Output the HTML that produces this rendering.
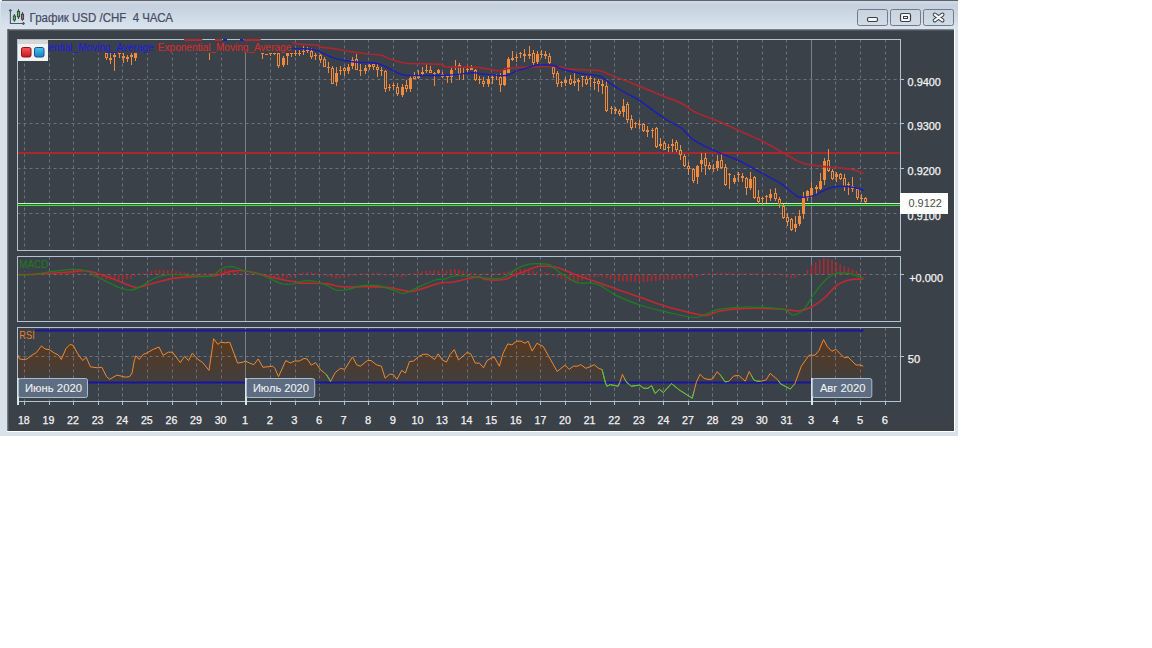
<!DOCTYPE html>
<html><head><meta charset="utf-8"><style>
html,body{margin:0;padding:0;background:#fff;}
body{width:1152px;height:648px;overflow:hidden;position:relative;font-family:"Liberation Sans",sans-serif;}
#win{position:absolute;left:0;top:0;width:958px;height:436px;background:#d9e2eb;border-radius:3px 0 0 0;}
#topline{position:absolute;left:2px;top:0;width:956px;height:1px;background:#5d636c;}
#title{position:absolute;left:1px;top:1px;width:957px;height:28px;background:linear-gradient(#d3dce5 0px,#c3d0dd 4px,#d9e4ee 27px);}
#ttext{position:absolute;left:29px;top:9px;font-size:13px;color:#4a4e62;white-space:nowrap;}
.btn{position:absolute;top:9px;width:29px;height:15px;border:1px solid #6f7b8c;border-radius:2.5px;background:linear-gradient(#c8d3de,#d3dce6);}
#dark{position:absolute;left:7px;top:29px;width:947px;height:402px;background:#3b4149;}
#dk_top{position:absolute;left:7px;top:29px;width:947px;height:2px;background:linear-gradient(#9096a0,#3b4149);}
#dk_left{position:absolute;left:7px;top:29px;width:2px;height:402px;background:linear-gradient(90deg,#8a909a,#3b4149);}
#wline_r{position:absolute;left:954px;top:29px;width:1px;height:403px;background:#ffffff;}
#wline_b{position:absolute;left:7px;top:431px;width:948px;height:1px;background:#ffffff;}
svg{position:absolute;left:0;top:0;}
</style></head><body>
<div id="win"></div>
<div id="topline"></div>
<div id="title"></div>
<svg width="30" height="30" style="left:0;top:0">
<path d="M10.4 9.5 L10.4 23.5 L24.2 23.5" fill="none" stroke="#4a5868" stroke-width="1.1"/>
<path d="M9 10.8 L10.4 9.2 L11.8 10.8 Z" fill="#4a5868" stroke="#4a5868" stroke-width="0.8"/>
<path d="M23 22.1 L24.8 23.5 L23 24.9 Z" fill="#4a5868" stroke="#4a5868" stroke-width="0.8"/>
<line x1="14.4" y1="14" x2="14.4" y2="21.8" stroke="#2e3e34" stroke-width="0.9"/>
<rect x="13.3" y="16" width="2.2" height="4" fill="#7ab07a" stroke="#24482a" stroke-width="0.9"/>
<line x1="18.5" y1="9.2" x2="18.5" y2="19" stroke="#2e3e34" stroke-width="0.9"/>
<rect x="17.4" y="11.3" width="2.2" height="5.5" fill="#7ab07a" stroke="#24482a" stroke-width="0.9"/>
<line x1="22.5" y1="12" x2="22.5" y2="21" stroke="#3e3440" stroke-width="0.9"/>
<rect x="21.4" y="14.2" width="2.2" height="5" fill="#9a7a8a" stroke="#40303a" stroke-width="0.9"/>
</svg>
<svg width="300" height="30" style="left:0;top:0"><text x="29.6" y="21.6" font-size="12" fill="#474a62" stroke="#474a62" stroke-width="0.2" font-family="Liberation Sans" textLength="143.4" lengthAdjust="spacingAndGlyphs" style="white-space:pre">График USD /CHF  4 ЧАСА</text></svg>
<div class="btn" style="left:857px"></div>
<div class="btn" style="left:890px"></div>
<div class="btn" style="left:923px"></div>
<svg width="958" height="30" style="left:0;top:0">
<rect x="867.5" y="17.5" width="10" height="4" rx="1.5" fill="#f4f6f8" stroke="#3a3f48" stroke-width="1.2"/>
<rect x="900.5" y="13.5" width="10" height="8" rx="1.5" fill="#f4f6f8" stroke="#3a3f48" stroke-width="1.2"/>
<rect x="903.5" y="16.5" width="4" height="2" fill="none" stroke="#3a3f48" stroke-width="1"/>
<path d="M934.8 14.6 L942.4 20.4 M942.4 14.6 L934.8 20.4" stroke="#3a3f48" stroke-width="4.2" stroke-linecap="round"/>
<path d="M934.8 14.6 L942.4 20.4 M942.4 14.6 L934.8 20.4" stroke="#f6f8fa" stroke-width="2.2" stroke-linecap="round"/>
</svg>
<div id="dark"></div>
<div id="dk_top"></div>
<div id="dk_left"></div>
<div id="wline_r"></div>
<div id="wline_b"></div>
<svg width="1152" height="648" viewBox="0 0 1152 648">
<defs>
<clipPath id="cm"><rect x="17.5" y="39.5" width="883.0" height="211.0"/></clipPath>
<clipPath id="cd"><rect x="17.5" y="256.5" width="883.0" height="65.0"/></clipPath>
<clipPath id="cr"><rect x="17.5" y="327.5" width="883.0" height="74.0"/></clipPath>
<linearGradient id="rsig" gradientUnits="userSpaceOnUse" x1="0" y1="338" x2="0" y2="386"><stop offset="0" stop-color="#5a391c" stop-opacity="1"/><stop offset="0.5" stop-color="#4d3b2e" stop-opacity="1"/><stop offset="0.85" stop-color="#433e3c" stop-opacity="1"/><stop offset="1" stop-color="#3b4149" stop-opacity="1"/></linearGradient>
<linearGradient id="gred" x1="0" y1="0" x2="0" y2="1"><stop offset="0" stop-color="#f45a5e"/><stop offset="1" stop-color="#c8141c"/></linearGradient>
<linearGradient id="gblue" x1="0" y1="0" x2="0" y2="1"><stop offset="0" stop-color="#4cc4f0"/><stop offset="1" stop-color="#1a7cc4"/></linearGradient>
</defs>
<line x1="24.5" y1="39.5" x2="24.5" y2="250.5" stroke="#68717c" stroke-width="1" stroke-dasharray="3 3"/>
<line x1="49.5" y1="39.5" x2="49.5" y2="250.5" stroke="#68717c" stroke-width="1" stroke-dasharray="3 3"/>
<line x1="73.5" y1="39.5" x2="73.5" y2="250.5" stroke="#68717c" stroke-width="1" stroke-dasharray="3 3"/>
<line x1="98.5" y1="39.5" x2="98.5" y2="250.5" stroke="#68717c" stroke-width="1" stroke-dasharray="3 3"/>
<line x1="122.5" y1="39.5" x2="122.5" y2="250.5" stroke="#68717c" stroke-width="1" stroke-dasharray="3 3"/>
<line x1="147.5" y1="39.5" x2="147.5" y2="250.5" stroke="#68717c" stroke-width="1" stroke-dasharray="3 3"/>
<line x1="172.5" y1="39.5" x2="172.5" y2="250.5" stroke="#68717c" stroke-width="1" stroke-dasharray="3 3"/>
<line x1="196.5" y1="39.5" x2="196.5" y2="250.5" stroke="#68717c" stroke-width="1" stroke-dasharray="3 3"/>
<line x1="221.5" y1="39.5" x2="221.5" y2="250.5" stroke="#68717c" stroke-width="1" stroke-dasharray="3 3"/>
<line x1="270.5" y1="39.5" x2="270.5" y2="250.5" stroke="#68717c" stroke-width="1" stroke-dasharray="3 3"/>
<line x1="295.5" y1="39.5" x2="295.5" y2="250.5" stroke="#68717c" stroke-width="1" stroke-dasharray="3 3"/>
<line x1="319.5" y1="39.5" x2="319.5" y2="250.5" stroke="#68717c" stroke-width="1" stroke-dasharray="3 3"/>
<line x1="344.5" y1="39.5" x2="344.5" y2="250.5" stroke="#68717c" stroke-width="1" stroke-dasharray="3 3"/>
<line x1="368.5" y1="39.5" x2="368.5" y2="250.5" stroke="#68717c" stroke-width="1" stroke-dasharray="3 3"/>
<line x1="393.5" y1="39.5" x2="393.5" y2="250.5" stroke="#68717c" stroke-width="1" stroke-dasharray="3 3"/>
<line x1="417.5" y1="39.5" x2="417.5" y2="250.5" stroke="#68717c" stroke-width="1" stroke-dasharray="3 3"/>
<line x1="442.5" y1="39.5" x2="442.5" y2="250.5" stroke="#68717c" stroke-width="1" stroke-dasharray="3 3"/>
<line x1="467.5" y1="39.5" x2="467.5" y2="250.5" stroke="#68717c" stroke-width="1" stroke-dasharray="3 3"/>
<line x1="491.5" y1="39.5" x2="491.5" y2="250.5" stroke="#68717c" stroke-width="1" stroke-dasharray="3 3"/>
<line x1="516.5" y1="39.5" x2="516.5" y2="250.5" stroke="#68717c" stroke-width="1" stroke-dasharray="3 3"/>
<line x1="540.5" y1="39.5" x2="540.5" y2="250.5" stroke="#68717c" stroke-width="1" stroke-dasharray="3 3"/>
<line x1="565.5" y1="39.5" x2="565.5" y2="250.5" stroke="#68717c" stroke-width="1" stroke-dasharray="3 3"/>
<line x1="590.5" y1="39.5" x2="590.5" y2="250.5" stroke="#68717c" stroke-width="1" stroke-dasharray="3 3"/>
<line x1="614.5" y1="39.5" x2="614.5" y2="250.5" stroke="#68717c" stroke-width="1" stroke-dasharray="3 3"/>
<line x1="639.5" y1="39.5" x2="639.5" y2="250.5" stroke="#68717c" stroke-width="1" stroke-dasharray="3 3"/>
<line x1="663.5" y1="39.5" x2="663.5" y2="250.5" stroke="#68717c" stroke-width="1" stroke-dasharray="3 3"/>
<line x1="688.5" y1="39.5" x2="688.5" y2="250.5" stroke="#68717c" stroke-width="1" stroke-dasharray="3 3"/>
<line x1="712.5" y1="39.5" x2="712.5" y2="250.5" stroke="#68717c" stroke-width="1" stroke-dasharray="3 3"/>
<line x1="737.5" y1="39.5" x2="737.5" y2="250.5" stroke="#68717c" stroke-width="1" stroke-dasharray="3 3"/>
<line x1="762.5" y1="39.5" x2="762.5" y2="250.5" stroke="#68717c" stroke-width="1" stroke-dasharray="3 3"/>
<line x1="786.5" y1="39.5" x2="786.5" y2="250.5" stroke="#68717c" stroke-width="1" stroke-dasharray="3 3"/>
<line x1="835.5" y1="39.5" x2="835.5" y2="250.5" stroke="#68717c" stroke-width="1" stroke-dasharray="3 3"/>
<line x1="860.5" y1="39.5" x2="860.5" y2="250.5" stroke="#68717c" stroke-width="1" stroke-dasharray="3 3"/>
<line x1="885.5" y1="39.5" x2="885.5" y2="250.5" stroke="#68717c" stroke-width="1" stroke-dasharray="3 3"/>
<line x1="245.5" y1="39.5" x2="245.5" y2="250.5" stroke="#75818e" stroke-width="1"/>
<line x1="811.5" y1="39.5" x2="811.5" y2="250.5" stroke="#75818e" stroke-width="1"/>
<line x1="17.5" y1="79.5" x2="900.5" y2="79.5" stroke="#68717c" stroke-width="1" stroke-dasharray="3 3"/>
<line x1="17.5" y1="123.5" x2="900.5" y2="123.5" stroke="#68717c" stroke-width="1" stroke-dasharray="3 3"/>
<line x1="17.5" y1="168.5" x2="900.5" y2="168.5" stroke="#68717c" stroke-width="1" stroke-dasharray="3 3"/>
<line x1="17.5" y1="213.5" x2="900.5" y2="213.5" stroke="#68717c" stroke-width="1" stroke-dasharray="3 3"/>
<g clip-path="url(#cm)">
<line x1="17.5" y1="153" x2="900.5" y2="153" stroke="#a8282e" stroke-width="2"/>
<line x1="17.5" y1="203.5" x2="900.5" y2="203.5" stroke="#cfe9cf" stroke-width="1"/>
<line x1="17.5" y1="204.5" x2="900.5" y2="204.5" stroke="#127a12" stroke-width="1"/>
<line x1="17.5" y1="205.5" x2="900.5" y2="205.5" stroke="#4fd44f" stroke-width="1"/>
<rect x="106" y="53" width="1" height="7" fill="#f08a3c"/>
<rect x="105" y="53" width="3" height="5" fill="#f08a3c"/>
<rect x="106" y="54" width="1" height="3" fill="#3b4149"/>
<rect x="110" y="53" width="1" height="11" fill="#f08a3c"/>
<rect x="109" y="58" width="3" height="2" fill="#f08a3c"/>
<rect x="114" y="53" width="1" height="18" fill="#f08a3c"/>
<rect x="113" y="55" width="3" height="2" fill="#f08a3c"/>
<rect x="119" y="53" width="1" height="5" fill="#f08a3c"/>
<rect x="118" y="53" width="3" height="1" fill="#f08a3c"/>
<rect x="123" y="53" width="1" height="10" fill="#f08a3c"/>
<rect x="122" y="56" width="3" height="2" fill="#f08a3c"/>
<rect x="127" y="55" width="1" height="7" fill="#f08a3c"/>
<rect x="126" y="57" width="3" height="2" fill="#f08a3c"/>
<rect x="131" y="53" width="1" height="12" fill="#f08a3c"/>
<rect x="130" y="55" width="3" height="2" fill="#f08a3c"/>
<rect x="135" y="53" width="1" height="8" fill="#f08a3c"/>
<rect x="134" y="53" width="3" height="5" fill="#f08a3c"/>
<rect x="209" y="52" width="1" height="8" fill="#f08a3c"/>
<rect x="208" y="52" width="3" height="1" fill="#f08a3c"/>
<rect x="262" y="53" width="1" height="6" fill="#f08a3c"/>
<rect x="261" y="53" width="3" height="1" fill="#f08a3c"/>
<rect x="266" y="54" width="1" height="1" fill="#f08a3c"/>
<rect x="265" y="54" width="3" height="1" fill="#f08a3c"/>
<rect x="270" y="53" width="1" height="3" fill="#f08a3c"/>
<rect x="269" y="53" width="3" height="1" fill="#f08a3c"/>
<rect x="274" y="53" width="1" height="2" fill="#f08a3c"/>
<rect x="273" y="53" width="3" height="1" fill="#f08a3c"/>
<rect x="278" y="53" width="1" height="15" fill="#f08a3c"/>
<rect x="277" y="53" width="3" height="13" fill="#f08a3c"/>
<rect x="278" y="54" width="1" height="11" fill="#3b4149"/>
<rect x="283" y="56" width="1" height="11" fill="#f08a3c"/>
<rect x="282" y="58" width="3" height="7" fill="#f08a3c"/>
<rect x="287" y="53" width="1" height="12" fill="#f08a3c"/>
<rect x="286" y="53" width="3" height="3" fill="#f08a3c"/>
<rect x="291" y="53" width="1" height="4" fill="#f08a3c"/>
<rect x="290" y="53" width="3" height="1" fill="#f08a3c"/>
<rect x="295" y="50" width="1" height="6" fill="#f08a3c"/>
<rect x="294" y="53" width="3" height="1" fill="#f08a3c"/>
<rect x="299" y="50" width="1" height="6" fill="#f08a3c"/>
<rect x="298" y="53" width="3" height="1" fill="#f08a3c"/>
<rect x="303" y="46" width="1" height="9" fill="#f08a3c"/>
<rect x="302" y="51" width="3" height="1" fill="#f08a3c"/>
<rect x="307" y="47" width="1" height="6" fill="#f08a3c"/>
<rect x="306" y="50" width="3" height="1" fill="#f08a3c"/>
<rect x="311" y="48" width="1" height="11" fill="#f08a3c"/>
<rect x="310" y="51" width="3" height="6" fill="#f08a3c"/>
<rect x="311" y="52" width="1" height="4" fill="#3b4149"/>
<rect x="315" y="53" width="1" height="7" fill="#f08a3c"/>
<rect x="314" y="55" width="3" height="1" fill="#f08a3c"/>
<rect x="320" y="54" width="1" height="9" fill="#f08a3c"/>
<rect x="319" y="55" width="3" height="5" fill="#f08a3c"/>
<rect x="320" y="56" width="1" height="3" fill="#3b4149"/>
<rect x="324" y="57" width="1" height="10" fill="#f08a3c"/>
<rect x="323" y="59" width="3" height="8" fill="#f08a3c"/>
<rect x="324" y="60" width="1" height="6" fill="#3b4149"/>
<rect x="328" y="62" width="1" height="11" fill="#f08a3c"/>
<rect x="327" y="67" width="3" height="1" fill="#f08a3c"/>
<rect x="332" y="66" width="1" height="18" fill="#f08a3c"/>
<rect x="331" y="68" width="3" height="16" fill="#f08a3c"/>
<rect x="332" y="69" width="1" height="14" fill="#3b4149"/>
<rect x="336" y="67" width="1" height="19" fill="#f08a3c"/>
<rect x="335" y="73" width="3" height="9" fill="#f08a3c"/>
<rect x="340" y="66" width="1" height="9" fill="#f08a3c"/>
<rect x="339" y="70" width="3" height="1" fill="#f08a3c"/>
<rect x="344" y="67" width="1" height="9" fill="#f08a3c"/>
<rect x="343" y="68" width="3" height="3" fill="#f08a3c"/>
<rect x="344" y="69" width="1" height="1" fill="#3b4149"/>
<rect x="348" y="64" width="1" height="10" fill="#f08a3c"/>
<rect x="347" y="67" width="3" height="4" fill="#f08a3c"/>
<rect x="352" y="57" width="1" height="12" fill="#f08a3c"/>
<rect x="351" y="60" width="3" height="6" fill="#f08a3c"/>
<rect x="356" y="54" width="1" height="16" fill="#f08a3c"/>
<rect x="355" y="59" width="3" height="11" fill="#f08a3c"/>
<rect x="356" y="60" width="1" height="9" fill="#3b4149"/>
<rect x="360" y="64" width="1" height="12" fill="#f08a3c"/>
<rect x="359" y="70" width="3" height="1" fill="#f08a3c"/>
<rect x="365" y="65" width="1" height="9" fill="#f08a3c"/>
<rect x="364" y="68" width="3" height="3" fill="#f08a3c"/>
<rect x="369" y="64" width="1" height="6" fill="#f08a3c"/>
<rect x="368" y="65" width="3" height="2" fill="#f08a3c"/>
<rect x="373" y="64" width="1" height="6" fill="#f08a3c"/>
<rect x="372" y="64" width="3" height="3" fill="#f08a3c"/>
<rect x="373" y="65" width="1" height="1" fill="#3b4149"/>
<rect x="377" y="63" width="1" height="14" fill="#f08a3c"/>
<rect x="376" y="67" width="3" height="3" fill="#f08a3c"/>
<rect x="377" y="68" width="1" height="1" fill="#3b4149"/>
<rect x="381" y="67" width="1" height="9" fill="#f08a3c"/>
<rect x="380" y="70" width="3" height="1" fill="#f08a3c"/>
<rect x="385" y="70" width="1" height="22" fill="#f08a3c"/>
<rect x="384" y="71" width="3" height="18" fill="#f08a3c"/>
<rect x="385" y="72" width="1" height="16" fill="#3b4149"/>
<rect x="389" y="84" width="1" height="7" fill="#f08a3c"/>
<rect x="388" y="87" width="3" height="1" fill="#f08a3c"/>
<rect x="393" y="83" width="1" height="7" fill="#f08a3c"/>
<rect x="392" y="85" width="3" height="1" fill="#f08a3c"/>
<rect x="397" y="83" width="1" height="13" fill="#f08a3c"/>
<rect x="396" y="87" width="3" height="7" fill="#f08a3c"/>
<rect x="397" y="88" width="1" height="5" fill="#3b4149"/>
<rect x="402" y="84" width="1" height="13" fill="#f08a3c"/>
<rect x="401" y="87" width="3" height="8" fill="#f08a3c"/>
<rect x="406" y="80" width="1" height="12" fill="#f08a3c"/>
<rect x="405" y="85" width="3" height="4" fill="#f08a3c"/>
<rect x="406" y="86" width="1" height="2" fill="#3b4149"/>
<rect x="410" y="76" width="1" height="16" fill="#f08a3c"/>
<rect x="409" y="78" width="3" height="11" fill="#f08a3c"/>
<rect x="414" y="72" width="1" height="7" fill="#f08a3c"/>
<rect x="413" y="76" width="3" height="3" fill="#f08a3c"/>
<rect x="414" y="77" width="1" height="1" fill="#3b4149"/>
<rect x="418" y="70" width="1" height="9" fill="#f08a3c"/>
<rect x="417" y="76" width="3" height="2" fill="#f08a3c"/>
<rect x="422" y="67" width="1" height="8" fill="#f08a3c"/>
<rect x="421" y="72" width="3" height="2" fill="#f08a3c"/>
<rect x="426" y="63" width="1" height="10" fill="#f08a3c"/>
<rect x="425" y="70" width="3" height="1" fill="#f08a3c"/>
<rect x="430" y="66" width="1" height="7" fill="#f08a3c"/>
<rect x="429" y="70" width="3" height="3" fill="#f08a3c"/>
<rect x="430" y="71" width="1" height="1" fill="#3b4149"/>
<rect x="434" y="72" width="1" height="14" fill="#f08a3c"/>
<rect x="433" y="73" width="3" height="1" fill="#f08a3c"/>
<rect x="438" y="69" width="1" height="5" fill="#f08a3c"/>
<rect x="437" y="70" width="3" height="3" fill="#f08a3c"/>
<rect x="442" y="72" width="1" height="6" fill="#f08a3c"/>
<rect x="441" y="74" width="3" height="3" fill="#f08a3c"/>
<rect x="442" y="75" width="1" height="1" fill="#3b4149"/>
<rect x="447" y="76" width="1" height="7" fill="#f08a3c"/>
<rect x="446" y="76" width="3" height="1" fill="#f08a3c"/>
<rect x="451" y="68" width="1" height="15" fill="#f08a3c"/>
<rect x="450" y="70" width="3" height="7" fill="#f08a3c"/>
<rect x="455" y="60" width="1" height="10" fill="#f08a3c"/>
<rect x="454" y="67" width="3" height="1" fill="#f08a3c"/>
<rect x="459" y="63" width="1" height="17" fill="#f08a3c"/>
<rect x="458" y="65" width="3" height="9" fill="#f08a3c"/>
<rect x="459" y="66" width="1" height="7" fill="#3b4149"/>
<rect x="463" y="68" width="1" height="12" fill="#f08a3c"/>
<rect x="462" y="73" width="3" height="1" fill="#f08a3c"/>
<rect x="467" y="66" width="1" height="7" fill="#f08a3c"/>
<rect x="466" y="69" width="3" height="1" fill="#f08a3c"/>
<rect x="471" y="65" width="1" height="5" fill="#f08a3c"/>
<rect x="470" y="68" width="3" height="2" fill="#f08a3c"/>
<rect x="475" y="69" width="1" height="12" fill="#f08a3c"/>
<rect x="474" y="70" width="3" height="10" fill="#f08a3c"/>
<rect x="475" y="71" width="1" height="8" fill="#3b4149"/>
<rect x="479" y="76" width="1" height="8" fill="#f08a3c"/>
<rect x="478" y="79" width="3" height="1" fill="#f08a3c"/>
<rect x="483" y="77" width="1" height="10" fill="#f08a3c"/>
<rect x="482" y="81" width="3" height="3" fill="#f08a3c"/>
<rect x="483" y="82" width="1" height="1" fill="#3b4149"/>
<rect x="488" y="76" width="1" height="11" fill="#f08a3c"/>
<rect x="487" y="79" width="3" height="5" fill="#f08a3c"/>
<rect x="492" y="75" width="1" height="9" fill="#f08a3c"/>
<rect x="491" y="77" width="3" height="1" fill="#f08a3c"/>
<rect x="496" y="74" width="1" height="6" fill="#f08a3c"/>
<rect x="495" y="75" width="3" height="1" fill="#f08a3c"/>
<rect x="500" y="73" width="1" height="19" fill="#f08a3c"/>
<rect x="499" y="77" width="3" height="8" fill="#f08a3c"/>
<rect x="500" y="78" width="1" height="6" fill="#3b4149"/>
<rect x="504" y="68" width="1" height="18" fill="#f08a3c"/>
<rect x="503" y="70" width="3" height="15" fill="#f08a3c"/>
<rect x="508" y="57" width="1" height="16" fill="#f08a3c"/>
<rect x="507" y="59" width="3" height="14" fill="#f08a3c"/>
<rect x="512" y="51" width="1" height="10" fill="#f08a3c"/>
<rect x="511" y="58" width="3" height="2" fill="#f08a3c"/>
<rect x="516" y="54" width="1" height="8" fill="#f08a3c"/>
<rect x="515" y="57" width="3" height="1" fill="#f08a3c"/>
<rect x="520" y="52" width="1" height="6" fill="#f08a3c"/>
<rect x="519" y="53" width="3" height="1" fill="#f08a3c"/>
<rect x="524" y="49" width="1" height="13" fill="#f08a3c"/>
<rect x="523" y="54" width="3" height="2" fill="#f08a3c"/>
<rect x="529" y="46" width="1" height="13" fill="#f08a3c"/>
<rect x="528" y="54" width="3" height="2" fill="#f08a3c"/>
<rect x="533" y="50" width="1" height="17" fill="#f08a3c"/>
<rect x="532" y="53" width="3" height="10" fill="#f08a3c"/>
<rect x="533" y="54" width="1" height="8" fill="#3b4149"/>
<rect x="537" y="51" width="1" height="13" fill="#f08a3c"/>
<rect x="536" y="54" width="3" height="8" fill="#f08a3c"/>
<rect x="541" y="50" width="1" height="8" fill="#f08a3c"/>
<rect x="540" y="54" width="3" height="1" fill="#f08a3c"/>
<rect x="545" y="51" width="1" height="8" fill="#f08a3c"/>
<rect x="544" y="54" width="3" height="2" fill="#f08a3c"/>
<rect x="549" y="53" width="1" height="11" fill="#f08a3c"/>
<rect x="548" y="56" width="3" height="7" fill="#f08a3c"/>
<rect x="549" y="57" width="1" height="5" fill="#3b4149"/>
<rect x="553" y="66" width="1" height="12" fill="#f08a3c"/>
<rect x="552" y="67" width="3" height="7" fill="#f08a3c"/>
<rect x="553" y="68" width="1" height="5" fill="#3b4149"/>
<rect x="557" y="71" width="1" height="16" fill="#f08a3c"/>
<rect x="556" y="73" width="3" height="11" fill="#f08a3c"/>
<rect x="557" y="74" width="1" height="9" fill="#3b4149"/>
<rect x="561" y="81" width="1" height="6" fill="#f08a3c"/>
<rect x="560" y="82" width="3" height="1" fill="#f08a3c"/>
<rect x="565" y="77" width="1" height="9" fill="#f08a3c"/>
<rect x="564" y="80" width="3" height="3" fill="#f08a3c"/>
<rect x="570" y="75" width="1" height="10" fill="#f08a3c"/>
<rect x="569" y="79" width="3" height="5" fill="#f08a3c"/>
<rect x="570" y="80" width="1" height="3" fill="#3b4149"/>
<rect x="574" y="72" width="1" height="14" fill="#f08a3c"/>
<rect x="573" y="81" width="3" height="2" fill="#f08a3c"/>
<rect x="578" y="78" width="1" height="13" fill="#f08a3c"/>
<rect x="577" y="80" width="3" height="2" fill="#f08a3c"/>
<rect x="582" y="76" width="1" height="11" fill="#f08a3c"/>
<rect x="581" y="76" width="3" height="1" fill="#f08a3c"/>
<rect x="586" y="76" width="1" height="9" fill="#f08a3c"/>
<rect x="585" y="79" width="3" height="5" fill="#f08a3c"/>
<rect x="586" y="80" width="1" height="3" fill="#3b4149"/>
<rect x="590" y="76" width="1" height="11" fill="#f08a3c"/>
<rect x="589" y="78" width="3" height="1" fill="#f08a3c"/>
<rect x="594" y="78" width="1" height="12" fill="#f08a3c"/>
<rect x="593" y="82" width="3" height="1" fill="#f08a3c"/>
<rect x="598" y="79" width="1" height="13" fill="#f08a3c"/>
<rect x="597" y="81" width="3" height="3" fill="#f08a3c"/>
<rect x="598" y="82" width="1" height="1" fill="#3b4149"/>
<rect x="602" y="80" width="1" height="14" fill="#f08a3c"/>
<rect x="601" y="84" width="3" height="2" fill="#f08a3c"/>
<rect x="606" y="81" width="1" height="31" fill="#f08a3c"/>
<rect x="605" y="86" width="3" height="25" fill="#f08a3c"/>
<rect x="606" y="87" width="1" height="23" fill="#3b4149"/>
<rect x="611" y="106" width="1" height="8" fill="#f08a3c"/>
<rect x="610" y="108" width="3" height="1" fill="#f08a3c"/>
<rect x="615" y="107" width="1" height="7" fill="#f08a3c"/>
<rect x="614" y="109" width="3" height="2" fill="#f08a3c"/>
<rect x="619" y="109" width="1" height="7" fill="#f08a3c"/>
<rect x="618" y="111" width="3" height="3" fill="#f08a3c"/>
<rect x="619" y="112" width="1" height="1" fill="#3b4149"/>
<rect x="623" y="99" width="1" height="18" fill="#f08a3c"/>
<rect x="622" y="106" width="3" height="6" fill="#f08a3c"/>
<rect x="627" y="102" width="1" height="21" fill="#f08a3c"/>
<rect x="626" y="104" width="3" height="16" fill="#f08a3c"/>
<rect x="627" y="105" width="1" height="14" fill="#3b4149"/>
<rect x="631" y="115" width="1" height="15" fill="#f08a3c"/>
<rect x="630" y="119" width="3" height="9" fill="#f08a3c"/>
<rect x="631" y="120" width="1" height="7" fill="#3b4149"/>
<rect x="635" y="122" width="1" height="6" fill="#f08a3c"/>
<rect x="634" y="123" width="3" height="1" fill="#f08a3c"/>
<rect x="639" y="120" width="1" height="9" fill="#f08a3c"/>
<rect x="638" y="124" width="3" height="1" fill="#f08a3c"/>
<rect x="643" y="123" width="1" height="9" fill="#f08a3c"/>
<rect x="642" y="124" width="3" height="7" fill="#f08a3c"/>
<rect x="643" y="125" width="1" height="5" fill="#3b4149"/>
<rect x="647" y="126" width="1" height="11" fill="#f08a3c"/>
<rect x="646" y="130" width="3" height="2" fill="#f08a3c"/>
<rect x="652" y="128" width="1" height="10" fill="#f08a3c"/>
<rect x="651" y="130" width="3" height="1" fill="#f08a3c"/>
<rect x="656" y="127" width="1" height="21" fill="#f08a3c"/>
<rect x="655" y="128" width="3" height="19" fill="#f08a3c"/>
<rect x="656" y="129" width="1" height="17" fill="#3b4149"/>
<rect x="660" y="138" width="1" height="11" fill="#f08a3c"/>
<rect x="659" y="144" width="3" height="2" fill="#f08a3c"/>
<rect x="664" y="141" width="1" height="9" fill="#f08a3c"/>
<rect x="663" y="143" width="3" height="7" fill="#f08a3c"/>
<rect x="664" y="144" width="1" height="5" fill="#3b4149"/>
<rect x="668" y="144" width="1" height="8" fill="#f08a3c"/>
<rect x="667" y="147" width="3" height="1" fill="#f08a3c"/>
<rect x="672" y="139" width="1" height="13" fill="#f08a3c"/>
<rect x="671" y="144" width="3" height="2" fill="#f08a3c"/>
<rect x="676" y="140" width="1" height="12" fill="#f08a3c"/>
<rect x="675" y="142" width="3" height="8" fill="#f08a3c"/>
<rect x="676" y="143" width="1" height="6" fill="#3b4149"/>
<rect x="680" y="145" width="1" height="15" fill="#f08a3c"/>
<rect x="679" y="150" width="3" height="5" fill="#f08a3c"/>
<rect x="680" y="151" width="1" height="3" fill="#3b4149"/>
<rect x="684" y="154" width="1" height="13" fill="#f08a3c"/>
<rect x="683" y="156" width="3" height="10" fill="#f08a3c"/>
<rect x="684" y="157" width="1" height="8" fill="#3b4149"/>
<rect x="688" y="162" width="1" height="13" fill="#f08a3c"/>
<rect x="687" y="166" width="3" height="3" fill="#f08a3c"/>
<rect x="688" y="167" width="1" height="1" fill="#3b4149"/>
<rect x="693" y="168" width="1" height="15" fill="#f08a3c"/>
<rect x="692" y="169" width="3" height="12" fill="#f08a3c"/>
<rect x="693" y="170" width="1" height="10" fill="#3b4149"/>
<rect x="697" y="165" width="1" height="19" fill="#f08a3c"/>
<rect x="696" y="166" width="3" height="11" fill="#f08a3c"/>
<rect x="701" y="153" width="1" height="19" fill="#f08a3c"/>
<rect x="700" y="160" width="3" height="4" fill="#f08a3c"/>
<rect x="705" y="153" width="1" height="22" fill="#f08a3c"/>
<rect x="704" y="158" width="3" height="8" fill="#f08a3c"/>
<rect x="705" y="159" width="1" height="6" fill="#3b4149"/>
<rect x="709" y="162" width="1" height="8" fill="#f08a3c"/>
<rect x="708" y="165" width="3" height="4" fill="#f08a3c"/>
<rect x="709" y="166" width="1" height="2" fill="#3b4149"/>
<rect x="713" y="164" width="1" height="8" fill="#f08a3c"/>
<rect x="712" y="168" width="3" height="1" fill="#f08a3c"/>
<rect x="717" y="155" width="1" height="16" fill="#f08a3c"/>
<rect x="716" y="161" width="3" height="7" fill="#f08a3c"/>
<rect x="721" y="154" width="1" height="15" fill="#f08a3c"/>
<rect x="720" y="160" width="3" height="8" fill="#f08a3c"/>
<rect x="721" y="161" width="1" height="6" fill="#3b4149"/>
<rect x="725" y="164" width="1" height="22" fill="#f08a3c"/>
<rect x="724" y="167" width="3" height="18" fill="#f08a3c"/>
<rect x="725" y="168" width="1" height="16" fill="#3b4149"/>
<rect x="729" y="173" width="1" height="16" fill="#f08a3c"/>
<rect x="728" y="174" width="3" height="1" fill="#f08a3c"/>
<rect x="734" y="175" width="1" height="9" fill="#f08a3c"/>
<rect x="733" y="178" width="3" height="4" fill="#f08a3c"/>
<rect x="738" y="172" width="1" height="10" fill="#f08a3c"/>
<rect x="737" y="174" width="3" height="1" fill="#f08a3c"/>
<rect x="742" y="173" width="1" height="9" fill="#f08a3c"/>
<rect x="741" y="176" width="3" height="2" fill="#f08a3c"/>
<rect x="746" y="177" width="1" height="18" fill="#f08a3c"/>
<rect x="745" y="178" width="3" height="10" fill="#f08a3c"/>
<rect x="746" y="179" width="1" height="8" fill="#3b4149"/>
<rect x="750" y="172" width="1" height="18" fill="#f08a3c"/>
<rect x="749" y="179" width="3" height="9" fill="#f08a3c"/>
<rect x="754" y="176" width="1" height="23" fill="#f08a3c"/>
<rect x="753" y="177" width="3" height="21" fill="#f08a3c"/>
<rect x="754" y="178" width="1" height="19" fill="#3b4149"/>
<rect x="758" y="190" width="1" height="14" fill="#f08a3c"/>
<rect x="757" y="197" width="3" height="5" fill="#f08a3c"/>
<rect x="758" y="198" width="1" height="3" fill="#3b4149"/>
<rect x="762" y="197" width="1" height="8" fill="#f08a3c"/>
<rect x="761" y="198" width="3" height="1" fill="#f08a3c"/>
<rect x="766" y="195" width="1" height="8" fill="#f08a3c"/>
<rect x="765" y="196" width="3" height="1" fill="#f08a3c"/>
<rect x="770" y="189" width="1" height="12" fill="#f08a3c"/>
<rect x="769" y="194" width="3" height="4" fill="#f08a3c"/>
<rect x="775" y="188" width="1" height="13" fill="#f08a3c"/>
<rect x="774" y="193" width="3" height="6" fill="#f08a3c"/>
<rect x="775" y="194" width="1" height="4" fill="#3b4149"/>
<rect x="779" y="197" width="1" height="11" fill="#f08a3c"/>
<rect x="778" y="199" width="3" height="5" fill="#f08a3c"/>
<rect x="779" y="200" width="1" height="3" fill="#3b4149"/>
<rect x="783" y="204" width="1" height="15" fill="#f08a3c"/>
<rect x="782" y="206" width="3" height="12" fill="#f08a3c"/>
<rect x="783" y="207" width="1" height="10" fill="#3b4149"/>
<rect x="787" y="213" width="1" height="13" fill="#f08a3c"/>
<rect x="786" y="217" width="3" height="5" fill="#f08a3c"/>
<rect x="787" y="218" width="1" height="3" fill="#3b4149"/>
<rect x="791" y="218" width="1" height="13" fill="#f08a3c"/>
<rect x="790" y="219" width="3" height="11" fill="#f08a3c"/>
<rect x="791" y="220" width="1" height="9" fill="#3b4149"/>
<rect x="795" y="216" width="1" height="16" fill="#f08a3c"/>
<rect x="794" y="224" width="3" height="4" fill="#f08a3c"/>
<rect x="799" y="210" width="1" height="16" fill="#f08a3c"/>
<rect x="798" y="216" width="3" height="8" fill="#f08a3c"/>
<rect x="803" y="192" width="1" height="27" fill="#f08a3c"/>
<rect x="802" y="198" width="3" height="16" fill="#f08a3c"/>
<rect x="807" y="190" width="1" height="11" fill="#f08a3c"/>
<rect x="806" y="191" width="3" height="7" fill="#f08a3c"/>
<rect x="811" y="182" width="1" height="16" fill="#f08a3c"/>
<rect x="810" y="188" width="3" height="8" fill="#f08a3c"/>
<rect x="816" y="185" width="1" height="9" fill="#f08a3c"/>
<rect x="815" y="187" width="3" height="2" fill="#f08a3c"/>
<rect x="820" y="173" width="1" height="17" fill="#f08a3c"/>
<rect x="819" y="181" width="3" height="8" fill="#f08a3c"/>
<rect x="824" y="158" width="1" height="27" fill="#f08a3c"/>
<rect x="823" y="161" width="3" height="19" fill="#f08a3c"/>
<rect x="828" y="149" width="1" height="23" fill="#f08a3c"/>
<rect x="827" y="160" width="3" height="11" fill="#f08a3c"/>
<rect x="828" y="161" width="1" height="9" fill="#3b4149"/>
<rect x="832" y="169" width="1" height="11" fill="#f08a3c"/>
<rect x="831" y="171" width="3" height="8" fill="#f08a3c"/>
<rect x="832" y="172" width="1" height="6" fill="#3b4149"/>
<rect x="836" y="172" width="1" height="10" fill="#f08a3c"/>
<rect x="835" y="174" width="3" height="3" fill="#f08a3c"/>
<rect x="840" y="173" width="1" height="7" fill="#f08a3c"/>
<rect x="839" y="174" width="3" height="5" fill="#f08a3c"/>
<rect x="840" y="175" width="1" height="3" fill="#3b4149"/>
<rect x="844" y="174" width="1" height="17" fill="#f08a3c"/>
<rect x="843" y="178" width="3" height="9" fill="#f08a3c"/>
<rect x="844" y="179" width="1" height="7" fill="#3b4149"/>
<rect x="848" y="182" width="1" height="13" fill="#f08a3c"/>
<rect x="847" y="184" width="3" height="1" fill="#f08a3c"/>
<rect x="852" y="177" width="1" height="15" fill="#f08a3c"/>
<rect x="851" y="186" width="3" height="3" fill="#f08a3c"/>
<rect x="852" y="187" width="1" height="1" fill="#3b4149"/>
<rect x="857" y="189" width="1" height="11" fill="#f08a3c"/>
<rect x="856" y="189" width="3" height="9" fill="#f08a3c"/>
<rect x="857" y="190" width="1" height="7" fill="#3b4149"/>
<rect x="861" y="194" width="1" height="8" fill="#f08a3c"/>
<rect x="860" y="198" width="3" height="1" fill="#f08a3c"/>
<rect x="865" y="197" width="1" height="6" fill="#f08a3c"/>
<rect x="864" y="198" width="3" height="4" fill="#f08a3c"/>
<rect x="865" y="199" width="1" height="2" fill="#3b4149"/>
<path d="M17.0,30.0 C44.2,31.3 151.2,36.3 180.0,38.0 C208.8,39.7 176.7,39.7 190.0,40.0 C203.3,40.3 242.9,39.5 260.0,40.0 C277.1,40.5 286.1,42.2 292.6,42.9 C299.1,43.6 294.8,43.9 298.9,44.2 C303.0,44.6 313.5,44.5 317.0,45.0 C320.5,45.5 317.2,46.4 319.7,47.0 C322.2,47.6 326.7,47.6 332.0,48.4 C337.3,49.2 345.6,51.0 351.7,51.9 C357.8,52.8 363.2,53.4 368.3,54.0 C373.4,54.6 378.5,54.6 382.0,55.4 C385.5,56.2 385.5,57.5 389.2,58.8 C392.9,60.1 399.3,62.2 404.4,63.0 C409.5,63.8 413.7,63.5 420.0,63.7 C426.3,63.9 437.7,63.9 442.0,64.4 C446.3,64.9 440.2,66.4 446.0,66.9 C451.8,67.4 467.9,66.8 476.7,67.4 C485.5,68.0 493.8,70.4 498.9,70.6 C503.9,70.8 502.4,69.2 507.0,68.6 C511.6,68.0 519.7,67.5 526.7,67.2 C533.7,66.9 543.4,66.6 548.9,66.5 C554.4,66.4 556.5,66.3 560.0,66.8 C563.5,67.3 563.5,68.6 570.0,69.2 C576.5,69.9 592.3,69.6 598.9,70.5 C605.5,71.4 603.6,72.5 609.7,74.8 C615.8,77.1 627.0,81.2 635.6,84.6 C644.2,88.0 653.9,92.3 661.5,95.4 C669.1,98.5 675.2,100.1 681.0,103.0 C686.8,105.9 689.5,109.4 696.0,112.6 C702.5,115.8 712.7,118.9 720.0,122.0 C727.3,125.1 733.3,128.0 740.0,131.0 C746.7,134.0 753.5,136.8 760.2,140.1 C766.9,143.4 773.6,147.4 780.3,151.1 C787.0,154.8 794.9,159.8 800.3,162.2 C805.6,164.5 807.4,164.4 812.4,165.2 C817.4,166.0 824.0,166.5 830.4,167.2 C836.8,167.9 845.0,168.2 850.5,169.2 C856.0,170.2 861.4,172.5 863.6,173.2" fill="none" stroke="#a82830" stroke-width="1.7" stroke-linejoin="round"/>
<path d="M17.0,30.0 C50.0,31.3 180.3,36.3 215.0,38.0 C249.7,39.7 221.7,39.8 225.0,40.0 C228.3,40.2 232.0,39.0 235.0,39.0 C238.0,39.0 237.2,39.2 243.0,40.0 C248.8,40.8 261.7,42.6 270.0,44.0 C278.3,45.4 285.9,47.6 292.6,48.4 C299.3,49.2 305.7,48.5 310.0,49.0 C314.3,49.5 314.6,49.8 318.3,51.2 C322.0,52.6 328.0,55.9 332.2,57.4 C336.4,58.9 339.1,59.4 343.3,60.2 C347.5,61.0 351.9,61.8 357.2,62.3 C362.5,62.8 370.7,62.3 375.3,63.0 C379.9,63.7 380.4,64.5 385.0,66.5 C389.6,68.5 397.2,73.3 403.0,74.8 C408.8,76.3 412.2,75.5 420.0,75.5 C427.8,75.5 441.2,75.5 450.0,75.0 C458.8,74.5 467.2,72.9 472.5,72.7 C477.8,72.5 476.4,73.5 482.0,74.0 C487.6,74.5 500.2,76.0 505.8,75.5 C511.4,75.0 512.0,72.6 515.5,71.3 C519.0,70.0 523.0,69.0 526.7,67.9 C530.4,66.9 533.2,65.3 537.8,65.0 C542.4,64.7 550.7,65.2 554.4,65.8 C558.1,66.4 557.4,67.5 560.0,68.4 C562.6,69.3 566.4,70.4 570.0,71.3 C573.6,72.2 576.8,73.0 581.6,73.8 C586.4,74.6 594.6,74.8 598.9,76.0 C603.2,77.2 603.9,79.0 607.5,81.3 C611.1,83.6 615.1,86.8 620.5,90.0 C625.9,93.2 632.8,96.1 640.0,100.8 C647.2,105.5 656.9,113.5 663.7,118.0 C670.5,122.5 676.3,124.4 681.0,127.8 C685.7,131.2 687.4,135.4 691.7,138.6 C696.0,141.8 702.2,144.8 706.9,147.2 C711.6,149.6 714.5,150.8 720.0,153.1 C725.5,155.4 733.3,158.0 740.0,161.2 C746.7,164.4 753.3,168.5 760.0,172.2 C766.7,175.9 774.6,179.5 780.3,183.2 C786.0,186.9 791.0,192.0 794.3,194.3 C797.6,196.7 796.9,197.1 800.3,197.3 C803.6,197.5 809.7,196.8 814.4,195.3 C819.1,193.8 824.0,189.8 828.4,188.3 C832.8,186.8 836.5,186.5 840.5,186.3 C844.5,186.1 848.6,186.6 852.5,187.3 C856.4,188.0 861.8,189.8 863.6,190.3" fill="none" stroke="#1c1cb8" stroke-width="1.4" stroke-linejoin="round"/>
</g>
<rect x="18" y="40" width="274" height="13" fill="#3b4149"/>
<text x="20" y="50.8" font-size="11.2" fill="#1a1ae8" font-family="Liberation Sans" textLength="133.5" lengthAdjust="spacingAndGlyphs">Exponential_Moving_Average</text>
<text x="157.8" y="50.8" font-size="11.2" fill="#e02828" font-family="Liberation Sans" textLength="133.5" lengthAdjust="spacingAndGlyphs">Exponential_Moving_Average</text>
<rect x="17" y="39" width="31" height="22" fill="#f2f2f2"/>
<rect x="17" y="39" width="31" height="5" fill="#d6d6d6"/>
<rect x="21.5" y="47.5" width="9.5" height="9.5" rx="1.8" fill="url(#gred)" stroke="#8a1418" stroke-width="1"/>
<rect x="34.5" y="47.5" width="9.5" height="9.5" rx="1.8" fill="url(#gblue)" stroke="#14508a" stroke-width="1"/>
<rect x="900" y="193" width="48" height="21" fill="#ffffff"/>
<line x1="24.5" y1="256.5" x2="24.5" y2="321.5" stroke="#68717c" stroke-width="1" stroke-dasharray="3 3"/>
<line x1="49.5" y1="256.5" x2="49.5" y2="321.5" stroke="#68717c" stroke-width="1" stroke-dasharray="3 3"/>
<line x1="73.5" y1="256.5" x2="73.5" y2="321.5" stroke="#68717c" stroke-width="1" stroke-dasharray="3 3"/>
<line x1="98.5" y1="256.5" x2="98.5" y2="321.5" stroke="#68717c" stroke-width="1" stroke-dasharray="3 3"/>
<line x1="122.5" y1="256.5" x2="122.5" y2="321.5" stroke="#68717c" stroke-width="1" stroke-dasharray="3 3"/>
<line x1="147.5" y1="256.5" x2="147.5" y2="321.5" stroke="#68717c" stroke-width="1" stroke-dasharray="3 3"/>
<line x1="172.5" y1="256.5" x2="172.5" y2="321.5" stroke="#68717c" stroke-width="1" stroke-dasharray="3 3"/>
<line x1="196.5" y1="256.5" x2="196.5" y2="321.5" stroke="#68717c" stroke-width="1" stroke-dasharray="3 3"/>
<line x1="221.5" y1="256.5" x2="221.5" y2="321.5" stroke="#68717c" stroke-width="1" stroke-dasharray="3 3"/>
<line x1="270.5" y1="256.5" x2="270.5" y2="321.5" stroke="#68717c" stroke-width="1" stroke-dasharray="3 3"/>
<line x1="295.5" y1="256.5" x2="295.5" y2="321.5" stroke="#68717c" stroke-width="1" stroke-dasharray="3 3"/>
<line x1="319.5" y1="256.5" x2="319.5" y2="321.5" stroke="#68717c" stroke-width="1" stroke-dasharray="3 3"/>
<line x1="344.5" y1="256.5" x2="344.5" y2="321.5" stroke="#68717c" stroke-width="1" stroke-dasharray="3 3"/>
<line x1="368.5" y1="256.5" x2="368.5" y2="321.5" stroke="#68717c" stroke-width="1" stroke-dasharray="3 3"/>
<line x1="393.5" y1="256.5" x2="393.5" y2="321.5" stroke="#68717c" stroke-width="1" stroke-dasharray="3 3"/>
<line x1="417.5" y1="256.5" x2="417.5" y2="321.5" stroke="#68717c" stroke-width="1" stroke-dasharray="3 3"/>
<line x1="442.5" y1="256.5" x2="442.5" y2="321.5" stroke="#68717c" stroke-width="1" stroke-dasharray="3 3"/>
<line x1="467.5" y1="256.5" x2="467.5" y2="321.5" stroke="#68717c" stroke-width="1" stroke-dasharray="3 3"/>
<line x1="491.5" y1="256.5" x2="491.5" y2="321.5" stroke="#68717c" stroke-width="1" stroke-dasharray="3 3"/>
<line x1="516.5" y1="256.5" x2="516.5" y2="321.5" stroke="#68717c" stroke-width="1" stroke-dasharray="3 3"/>
<line x1="540.5" y1="256.5" x2="540.5" y2="321.5" stroke="#68717c" stroke-width="1" stroke-dasharray="3 3"/>
<line x1="565.5" y1="256.5" x2="565.5" y2="321.5" stroke="#68717c" stroke-width="1" stroke-dasharray="3 3"/>
<line x1="590.5" y1="256.5" x2="590.5" y2="321.5" stroke="#68717c" stroke-width="1" stroke-dasharray="3 3"/>
<line x1="614.5" y1="256.5" x2="614.5" y2="321.5" stroke="#68717c" stroke-width="1" stroke-dasharray="3 3"/>
<line x1="639.5" y1="256.5" x2="639.5" y2="321.5" stroke="#68717c" stroke-width="1" stroke-dasharray="3 3"/>
<line x1="663.5" y1="256.5" x2="663.5" y2="321.5" stroke="#68717c" stroke-width="1" stroke-dasharray="3 3"/>
<line x1="688.5" y1="256.5" x2="688.5" y2="321.5" stroke="#68717c" stroke-width="1" stroke-dasharray="3 3"/>
<line x1="712.5" y1="256.5" x2="712.5" y2="321.5" stroke="#68717c" stroke-width="1" stroke-dasharray="3 3"/>
<line x1="737.5" y1="256.5" x2="737.5" y2="321.5" stroke="#68717c" stroke-width="1" stroke-dasharray="3 3"/>
<line x1="762.5" y1="256.5" x2="762.5" y2="321.5" stroke="#68717c" stroke-width="1" stroke-dasharray="3 3"/>
<line x1="786.5" y1="256.5" x2="786.5" y2="321.5" stroke="#68717c" stroke-width="1" stroke-dasharray="3 3"/>
<line x1="835.5" y1="256.5" x2="835.5" y2="321.5" stroke="#68717c" stroke-width="1" stroke-dasharray="3 3"/>
<line x1="860.5" y1="256.5" x2="860.5" y2="321.5" stroke="#68717c" stroke-width="1" stroke-dasharray="3 3"/>
<line x1="885.5" y1="256.5" x2="885.5" y2="321.5" stroke="#68717c" stroke-width="1" stroke-dasharray="3 3"/>
<line x1="245.5" y1="256.5" x2="245.5" y2="321.5" stroke="#75818e" stroke-width="1"/>
<line x1="811.5" y1="256.5" x2="811.5" y2="321.5" stroke="#75818e" stroke-width="1"/>
<line x1="17.5" y1="274.5" x2="900.5" y2="274.5" stroke="#68717c" stroke-width="1" stroke-dasharray="3 3"/>
<g clip-path="url(#cd)">
<line x1="20.2" y1="274.5" x2="20.2" y2="273.3" stroke="#b8282c" stroke-width="1.6" stroke-opacity="0.9"/>
<line x1="24.3" y1="274.5" x2="24.3" y2="273.3" stroke="#b8282c" stroke-width="1.6" stroke-opacity="0.9"/>
<line x1="28.4" y1="274.5" x2="28.4" y2="273.3" stroke="#b8282c" stroke-width="1.6" stroke-opacity="0.9"/>
<line x1="32.5" y1="274.5" x2="32.5" y2="275.7" stroke="#b8282c" stroke-width="1.6" stroke-opacity="0.9"/>
<line x1="36.6" y1="274.5" x2="36.6" y2="273.3" stroke="#b8282c" stroke-width="1.6" stroke-opacity="0.9"/>
<line x1="40.7" y1="274.5" x2="40.7" y2="273.3" stroke="#b8282c" stroke-width="1.6" stroke-opacity="0.9"/>
<line x1="44.8" y1="274.5" x2="44.8" y2="273.3" stroke="#b8282c" stroke-width="1.6" stroke-opacity="0.9"/>
<line x1="48.9" y1="274.5" x2="48.9" y2="273.1" stroke="#b8282c" stroke-width="1.6" stroke-opacity="0.9"/>
<line x1="53.0" y1="274.5" x2="53.0" y2="272.9" stroke="#b8282c" stroke-width="1.6" stroke-opacity="0.9"/>
<line x1="57.1" y1="274.5" x2="57.1" y2="272.7" stroke="#b8282c" stroke-width="1.6" stroke-opacity="0.9"/>
<line x1="61.2" y1="274.5" x2="61.2" y2="272.6" stroke="#b8282c" stroke-width="1.6" stroke-opacity="0.9"/>
<line x1="65.3" y1="274.5" x2="65.3" y2="272.4" stroke="#b8282c" stroke-width="1.6" stroke-opacity="0.9"/>
<line x1="69.4" y1="274.5" x2="69.4" y2="272.2" stroke="#b8282c" stroke-width="1.6" stroke-opacity="0.9"/>
<line x1="73.5" y1="274.5" x2="73.5" y2="272.1" stroke="#b8282c" stroke-width="1.6" stroke-opacity="0.9"/>
<line x1="77.6" y1="274.5" x2="77.6" y2="272.8" stroke="#b8282c" stroke-width="1.6" stroke-opacity="0.9"/>
<line x1="81.7" y1="274.5" x2="81.7" y2="273.3" stroke="#b8282c" stroke-width="1.6" stroke-opacity="0.9"/>
<line x1="85.8" y1="274.5" x2="85.8" y2="273.3" stroke="#b8282c" stroke-width="1.6" stroke-opacity="0.9"/>
<line x1="89.9" y1="274.5" x2="89.9" y2="275.7" stroke="#b8282c" stroke-width="1.6" stroke-opacity="0.9"/>
<line x1="94.0" y1="274.5" x2="94.0" y2="276.7" stroke="#b8282c" stroke-width="1.6" stroke-opacity="0.9"/>
<line x1="98.1" y1="274.5" x2="98.1" y2="277.7" stroke="#b8282c" stroke-width="1.6" stroke-opacity="0.9"/>
<line x1="102.2" y1="274.5" x2="102.2" y2="278.6" stroke="#b8282c" stroke-width="1.6" stroke-opacity="0.9"/>
<line x1="106.3" y1="274.5" x2="106.3" y2="279.4" stroke="#b8282c" stroke-width="1.6" stroke-opacity="0.9"/>
<line x1="110.4" y1="274.5" x2="110.4" y2="280.0" stroke="#b8282c" stroke-width="1.6" stroke-opacity="0.9"/>
<line x1="114.5" y1="274.5" x2="114.5" y2="280.3" stroke="#b8282c" stroke-width="1.6" stroke-opacity="0.9"/>
<line x1="118.6" y1="274.5" x2="118.6" y2="280.5" stroke="#b8282c" stroke-width="1.6" stroke-opacity="0.9"/>
<line x1="122.7" y1="274.5" x2="122.7" y2="280.3" stroke="#b8282c" stroke-width="1.6" stroke-opacity="0.9"/>
<line x1="126.8" y1="274.5" x2="126.8" y2="279.4" stroke="#b8282c" stroke-width="1.6" stroke-opacity="0.9"/>
<line x1="130.9" y1="274.5" x2="130.9" y2="278.8" stroke="#b8282c" stroke-width="1.6" stroke-opacity="0.9"/>
<line x1="135.0" y1="274.5" x2="135.0" y2="276.2" stroke="#b8282c" stroke-width="1.6" stroke-opacity="0.9"/>
<line x1="139.1" y1="274.5" x2="139.1" y2="273.3" stroke="#b8282c" stroke-width="1.6" stroke-opacity="0.9"/>
<line x1="143.2" y1="274.5" x2="143.2" y2="273.3" stroke="#b8282c" stroke-width="1.6" stroke-opacity="0.9"/>
<line x1="147.3" y1="274.5" x2="147.3" y2="272.4" stroke="#b8282c" stroke-width="1.6" stroke-opacity="0.9"/>
<line x1="151.4" y1="274.5" x2="151.4" y2="271.2" stroke="#b8282c" stroke-width="1.6" stroke-opacity="0.9"/>
<line x1="155.5" y1="274.5" x2="155.5" y2="269.9" stroke="#b8282c" stroke-width="1.6" stroke-opacity="0.9"/>
<line x1="159.6" y1="274.5" x2="159.6" y2="269.4" stroke="#b8282c" stroke-width="1.6" stroke-opacity="0.9"/>
<line x1="163.7" y1="274.5" x2="163.7" y2="269.8" stroke="#b8282c" stroke-width="1.6" stroke-opacity="0.9"/>
<line x1="167.8" y1="274.5" x2="167.8" y2="270.1" stroke="#b8282c" stroke-width="1.6" stroke-opacity="0.9"/>
<line x1="171.9" y1="274.5" x2="171.9" y2="270.5" stroke="#b8282c" stroke-width="1.6" stroke-opacity="0.9"/>
<line x1="176.0" y1="274.5" x2="176.0" y2="271.0" stroke="#b8282c" stroke-width="1.6" stroke-opacity="0.9"/>
<line x1="180.1" y1="274.5" x2="180.1" y2="271.6" stroke="#b8282c" stroke-width="1.6" stroke-opacity="0.9"/>
<line x1="184.2" y1="274.5" x2="184.2" y2="272.2" stroke="#b8282c" stroke-width="1.6" stroke-opacity="0.9"/>
<line x1="188.3" y1="274.5" x2="188.3" y2="272.8" stroke="#b8282c" stroke-width="1.6" stroke-opacity="0.9"/>
<line x1="192.4" y1="274.5" x2="192.4" y2="273.3" stroke="#b8282c" stroke-width="1.6" stroke-opacity="0.9"/>
<line x1="196.5" y1="274.5" x2="196.5" y2="273.3" stroke="#b8282c" stroke-width="1.6" stroke-opacity="0.9"/>
<line x1="200.6" y1="274.5" x2="200.6" y2="273.3" stroke="#b8282c" stroke-width="1.6" stroke-opacity="0.9"/>
<line x1="204.7" y1="274.5" x2="204.7" y2="273.3" stroke="#b8282c" stroke-width="1.6" stroke-opacity="0.9"/>
<line x1="208.8" y1="274.5" x2="208.8" y2="273.3" stroke="#b8282c" stroke-width="1.6" stroke-opacity="0.9"/>
<line x1="212.9" y1="274.5" x2="212.9" y2="273.3" stroke="#b8282c" stroke-width="1.6" stroke-opacity="0.9"/>
<line x1="217.0" y1="274.5" x2="217.0" y2="271.5" stroke="#b8282c" stroke-width="1.6" stroke-opacity="0.9"/>
<line x1="221.1" y1="274.5" x2="221.1" y2="269.5" stroke="#b8282c" stroke-width="1.6" stroke-opacity="0.9"/>
<line x1="225.2" y1="274.5" x2="225.2" y2="269.1" stroke="#b8282c" stroke-width="1.6" stroke-opacity="0.9"/>
<line x1="229.3" y1="274.5" x2="229.3" y2="269.7" stroke="#b8282c" stroke-width="1.6" stroke-opacity="0.9"/>
<line x1="233.4" y1="274.5" x2="233.4" y2="270.3" stroke="#b8282c" stroke-width="1.6" stroke-opacity="0.9"/>
<line x1="237.5" y1="274.5" x2="237.5" y2="271.9" stroke="#b8282c" stroke-width="1.6" stroke-opacity="0.9"/>
<line x1="241.6" y1="274.5" x2="241.6" y2="273.3" stroke="#b8282c" stroke-width="1.6" stroke-opacity="0.9"/>
<line x1="245.7" y1="274.5" x2="245.7" y2="275.7" stroke="#b8282c" stroke-width="1.6" stroke-opacity="0.9"/>
<line x1="249.8" y1="274.5" x2="249.8" y2="273.3" stroke="#b8282c" stroke-width="1.6" stroke-opacity="0.9"/>
<line x1="253.9" y1="274.5" x2="253.9" y2="273.3" stroke="#b8282c" stroke-width="1.6" stroke-opacity="0.9"/>
<line x1="258.0" y1="274.5" x2="258.0" y2="273.3" stroke="#b8282c" stroke-width="1.6" stroke-opacity="0.9"/>
<line x1="262.1" y1="274.5" x2="262.1" y2="275.7" stroke="#b8282c" stroke-width="1.6" stroke-opacity="0.9"/>
<line x1="266.2" y1="274.5" x2="266.2" y2="275.8" stroke="#b8282c" stroke-width="1.6" stroke-opacity="0.9"/>
<line x1="270.3" y1="274.5" x2="270.3" y2="276.5" stroke="#b8282c" stroke-width="1.6" stroke-opacity="0.9"/>
<line x1="274.4" y1="274.5" x2="274.4" y2="277.3" stroke="#b8282c" stroke-width="1.6" stroke-opacity="0.9"/>
<line x1="278.5" y1="274.5" x2="278.5" y2="278.0" stroke="#b8282c" stroke-width="1.6" stroke-opacity="0.9"/>
<line x1="282.6" y1="274.5" x2="282.6" y2="278.8" stroke="#b8282c" stroke-width="1.6" stroke-opacity="0.9"/>
<line x1="286.7" y1="274.5" x2="286.7" y2="278.1" stroke="#b8282c" stroke-width="1.6" stroke-opacity="0.9"/>
<line x1="290.8" y1="274.5" x2="290.8" y2="277.4" stroke="#b8282c" stroke-width="1.6" stroke-opacity="0.9"/>
<line x1="294.9" y1="274.5" x2="294.9" y2="276.2" stroke="#b8282c" stroke-width="1.6" stroke-opacity="0.9"/>
<line x1="299.0" y1="274.5" x2="299.0" y2="273.3" stroke="#b8282c" stroke-width="1.6" stroke-opacity="0.9"/>
<line x1="303.1" y1="274.5" x2="303.1" y2="272.5" stroke="#b8282c" stroke-width="1.6" stroke-opacity="0.9"/>
<line x1="307.2" y1="274.5" x2="307.2" y2="272.3" stroke="#b8282c" stroke-width="1.6" stroke-opacity="0.9"/>
<line x1="311.3" y1="274.5" x2="311.3" y2="272.2" stroke="#b8282c" stroke-width="1.6" stroke-opacity="0.9"/>
<line x1="315.4" y1="274.5" x2="315.4" y2="272.8" stroke="#b8282c" stroke-width="1.6" stroke-opacity="0.9"/>
<line x1="319.5" y1="274.5" x2="319.5" y2="273.3" stroke="#b8282c" stroke-width="1.6" stroke-opacity="0.9"/>
<line x1="323.6" y1="274.5" x2="323.6" y2="275.7" stroke="#b8282c" stroke-width="1.6" stroke-opacity="0.9"/>
<line x1="327.7" y1="274.5" x2="327.7" y2="276.4" stroke="#b8282c" stroke-width="1.6" stroke-opacity="0.9"/>
<line x1="331.8" y1="274.5" x2="331.8" y2="277.6" stroke="#b8282c" stroke-width="1.6" stroke-opacity="0.9"/>
<line x1="335.9" y1="274.5" x2="335.9" y2="278.8" stroke="#b8282c" stroke-width="1.6" stroke-opacity="0.9"/>
<line x1="340.0" y1="274.5" x2="340.0" y2="278.0" stroke="#b8282c" stroke-width="1.6" stroke-opacity="0.9"/>
<line x1="344.1" y1="274.5" x2="344.1" y2="277.5" stroke="#b8282c" stroke-width="1.6" stroke-opacity="0.9"/>
<line x1="348.2" y1="274.5" x2="348.2" y2="277.0" stroke="#b8282c" stroke-width="1.6" stroke-opacity="0.9"/>
<line x1="352.3" y1="274.5" x2="352.3" y2="276.0" stroke="#b8282c" stroke-width="1.6" stroke-opacity="0.9"/>
<line x1="356.4" y1="274.5" x2="356.4" y2="275.7" stroke="#b8282c" stroke-width="1.6" stroke-opacity="0.9"/>
<line x1="360.5" y1="274.5" x2="360.5" y2="273.3" stroke="#b8282c" stroke-width="1.6" stroke-opacity="0.9"/>
<line x1="364.6" y1="274.5" x2="364.6" y2="273.3" stroke="#b8282c" stroke-width="1.6" stroke-opacity="0.9"/>
<line x1="368.7" y1="274.5" x2="368.7" y2="273.3" stroke="#b8282c" stroke-width="1.6" stroke-opacity="0.9"/>
<line x1="372.8" y1="274.5" x2="372.8" y2="273.2" stroke="#b8282c" stroke-width="1.6" stroke-opacity="0.9"/>
<line x1="376.9" y1="274.5" x2="376.9" y2="273.1" stroke="#b8282c" stroke-width="1.6" stroke-opacity="0.9"/>
<line x1="381.0" y1="274.5" x2="381.0" y2="273.3" stroke="#b8282c" stroke-width="1.6" stroke-opacity="0.9"/>
<line x1="385.1" y1="274.5" x2="385.1" y2="275.7" stroke="#b8282c" stroke-width="1.6" stroke-opacity="0.9"/>
<line x1="389.2" y1="274.5" x2="389.2" y2="275.8" stroke="#b8282c" stroke-width="1.6" stroke-opacity="0.9"/>
<line x1="393.3" y1="274.5" x2="393.3" y2="276.2" stroke="#b8282c" stroke-width="1.6" stroke-opacity="0.9"/>
<line x1="397.4" y1="274.5" x2="397.4" y2="276.7" stroke="#b8282c" stroke-width="1.6" stroke-opacity="0.9"/>
<line x1="401.5" y1="274.5" x2="401.5" y2="277.2" stroke="#b8282c" stroke-width="1.6" stroke-opacity="0.9"/>
<line x1="405.6" y1="274.5" x2="405.6" y2="276.5" stroke="#b8282c" stroke-width="1.6" stroke-opacity="0.9"/>
<line x1="409.7" y1="274.5" x2="409.7" y2="273.3" stroke="#b8282c" stroke-width="1.6" stroke-opacity="0.9"/>
<line x1="413.8" y1="274.5" x2="413.8" y2="273.0" stroke="#b8282c" stroke-width="1.6" stroke-opacity="0.9"/>
<line x1="417.9" y1="274.5" x2="417.9" y2="272.0" stroke="#b8282c" stroke-width="1.6" stroke-opacity="0.9"/>
<line x1="422.0" y1="274.5" x2="422.0" y2="271.4" stroke="#b8282c" stroke-width="1.6" stroke-opacity="0.9"/>
<line x1="426.1" y1="274.5" x2="426.1" y2="271.0" stroke="#b8282c" stroke-width="1.6" stroke-opacity="0.9"/>
<line x1="430.2" y1="274.5" x2="430.2" y2="270.6" stroke="#b8282c" stroke-width="1.6" stroke-opacity="0.9"/>
<line x1="434.3" y1="274.5" x2="434.3" y2="270.2" stroke="#b8282c" stroke-width="1.6" stroke-opacity="0.9"/>
<line x1="438.4" y1="274.5" x2="438.4" y2="270.6" stroke="#b8282c" stroke-width="1.6" stroke-opacity="0.9"/>
<line x1="442.5" y1="274.5" x2="442.5" y2="270.8" stroke="#b8282c" stroke-width="1.6" stroke-opacity="0.9"/>
<line x1="446.6" y1="274.5" x2="446.6" y2="270.4" stroke="#b8282c" stroke-width="1.6" stroke-opacity="0.9"/>
<line x1="450.7" y1="274.5" x2="450.7" y2="269.3" stroke="#b8282c" stroke-width="1.6" stroke-opacity="0.9"/>
<line x1="454.8" y1="274.5" x2="454.8" y2="269.0" stroke="#b8282c" stroke-width="1.6" stroke-opacity="0.9"/>
<line x1="458.9" y1="274.5" x2="458.9" y2="269.8" stroke="#b8282c" stroke-width="1.6" stroke-opacity="0.9"/>
<line x1="463.0" y1="274.5" x2="463.0" y2="270.7" stroke="#b8282c" stroke-width="1.6" stroke-opacity="0.9"/>
<line x1="467.1" y1="274.5" x2="467.1" y2="271.6" stroke="#b8282c" stroke-width="1.6" stroke-opacity="0.9"/>
<line x1="471.2" y1="274.5" x2="471.2" y2="272.8" stroke="#b8282c" stroke-width="1.6" stroke-opacity="0.9"/>
<line x1="475.3" y1="274.5" x2="475.3" y2="273.3" stroke="#b8282c" stroke-width="1.6" stroke-opacity="0.9"/>
<line x1="479.4" y1="274.5" x2="479.4" y2="275.7" stroke="#b8282c" stroke-width="1.6" stroke-opacity="0.9"/>
<line x1="483.5" y1="274.5" x2="483.5" y2="273.3" stroke="#b8282c" stroke-width="1.6" stroke-opacity="0.9"/>
<line x1="487.6" y1="274.5" x2="487.6" y2="273.1" stroke="#b8282c" stroke-width="1.6" stroke-opacity="0.9"/>
<line x1="491.7" y1="274.5" x2="491.7" y2="273.3" stroke="#b8282c" stroke-width="1.6" stroke-opacity="0.9"/>
<line x1="495.8" y1="274.5" x2="495.8" y2="273.3" stroke="#b8282c" stroke-width="1.6" stroke-opacity="0.9"/>
<line x1="499.9" y1="274.5" x2="499.9" y2="272.9" stroke="#b8282c" stroke-width="1.6" stroke-opacity="0.9"/>
<line x1="504.0" y1="274.5" x2="504.0" y2="272.1" stroke="#b8282c" stroke-width="1.6" stroke-opacity="0.9"/>
<line x1="508.1" y1="274.5" x2="508.1" y2="271.6" stroke="#b8282c" stroke-width="1.6" stroke-opacity="0.9"/>
<line x1="512.2" y1="274.5" x2="512.2" y2="270.5" stroke="#b8282c" stroke-width="1.6" stroke-opacity="0.9"/>
<line x1="516.3" y1="274.5" x2="516.3" y2="269.2" stroke="#b8282c" stroke-width="1.6" stroke-opacity="0.9"/>
<line x1="520.4" y1="274.5" x2="520.4" y2="269.1" stroke="#b8282c" stroke-width="1.6" stroke-opacity="0.9"/>
<line x1="524.5" y1="274.5" x2="524.5" y2="269.1" stroke="#b8282c" stroke-width="1.6" stroke-opacity="0.9"/>
<line x1="528.6" y1="274.5" x2="528.6" y2="269.2" stroke="#b8282c" stroke-width="1.6" stroke-opacity="0.9"/>
<line x1="532.7" y1="274.5" x2="532.7" y2="270.6" stroke="#b8282c" stroke-width="1.6" stroke-opacity="0.9"/>
<line x1="536.8" y1="274.5" x2="536.8" y2="271.6" stroke="#b8282c" stroke-width="1.6" stroke-opacity="0.9"/>
<line x1="540.9" y1="274.5" x2="540.9" y2="272.4" stroke="#b8282c" stroke-width="1.6" stroke-opacity="0.9"/>
<line x1="545.0" y1="274.5" x2="545.0" y2="272.2" stroke="#b8282c" stroke-width="1.6" stroke-opacity="0.9"/>
<line x1="549.1" y1="274.5" x2="549.1" y2="273.1" stroke="#b8282c" stroke-width="1.6" stroke-opacity="0.9"/>
<line x1="553.2" y1="274.5" x2="553.2" y2="275.7" stroke="#b8282c" stroke-width="1.6" stroke-opacity="0.9"/>
<line x1="557.3" y1="274.5" x2="557.3" y2="277.2" stroke="#b8282c" stroke-width="1.6" stroke-opacity="0.9"/>
<line x1="561.4" y1="274.5" x2="561.4" y2="279.0" stroke="#b8282c" stroke-width="1.6" stroke-opacity="0.9"/>
<line x1="565.5" y1="274.5" x2="565.5" y2="280.0" stroke="#b8282c" stroke-width="1.6" stroke-opacity="0.9"/>
<line x1="569.6" y1="274.5" x2="569.6" y2="280.9" stroke="#b8282c" stroke-width="1.6" stroke-opacity="0.9"/>
<line x1="573.7" y1="274.5" x2="573.7" y2="281.4" stroke="#b8282c" stroke-width="1.6" stroke-opacity="0.9"/>
<line x1="577.8" y1="274.5" x2="577.8" y2="281.5" stroke="#b8282c" stroke-width="1.6" stroke-opacity="0.9"/>
<line x1="581.9" y1="274.5" x2="581.9" y2="280.5" stroke="#b8282c" stroke-width="1.6" stroke-opacity="0.9"/>
<line x1="586.0" y1="274.5" x2="586.0" y2="279.1" stroke="#b8282c" stroke-width="1.6" stroke-opacity="0.9"/>
<line x1="590.1" y1="274.5" x2="590.1" y2="277.8" stroke="#b8282c" stroke-width="1.6" stroke-opacity="0.9"/>
<line x1="594.2" y1="274.5" x2="594.2" y2="277.3" stroke="#b8282c" stroke-width="1.6" stroke-opacity="0.9"/>
<line x1="598.3" y1="274.5" x2="598.3" y2="276.9" stroke="#b8282c" stroke-width="1.6" stroke-opacity="0.9"/>
<line x1="602.4" y1="274.5" x2="602.4" y2="277.2" stroke="#b8282c" stroke-width="1.6" stroke-opacity="0.9"/>
<line x1="606.5" y1="274.5" x2="606.5" y2="278.3" stroke="#b8282c" stroke-width="1.6" stroke-opacity="0.9"/>
<line x1="610.6" y1="274.5" x2="610.6" y2="279.5" stroke="#b8282c" stroke-width="1.6" stroke-opacity="0.9"/>
<line x1="614.7" y1="274.5" x2="614.7" y2="280.6" stroke="#b8282c" stroke-width="1.6" stroke-opacity="0.9"/>
<line x1="618.8" y1="274.5" x2="618.8" y2="281.1" stroke="#b8282c" stroke-width="1.6" stroke-opacity="0.9"/>
<line x1="622.9" y1="274.5" x2="622.9" y2="281.3" stroke="#b8282c" stroke-width="1.6" stroke-opacity="0.9"/>
<line x1="627.0" y1="274.5" x2="627.0" y2="281.6" stroke="#b8282c" stroke-width="1.6" stroke-opacity="0.9"/>
<line x1="631.1" y1="274.5" x2="631.1" y2="281.8" stroke="#b8282c" stroke-width="1.6" stroke-opacity="0.9"/>
<line x1="635.2" y1="274.5" x2="635.2" y2="282.0" stroke="#b8282c" stroke-width="1.6" stroke-opacity="0.9"/>
<line x1="639.3" y1="274.5" x2="639.3" y2="282.2" stroke="#b8282c" stroke-width="1.6" stroke-opacity="0.9"/>
<line x1="643.4" y1="274.5" x2="643.4" y2="282.2" stroke="#b8282c" stroke-width="1.6" stroke-opacity="0.9"/>
<line x1="647.5" y1="274.5" x2="647.5" y2="281.8" stroke="#b8282c" stroke-width="1.6" stroke-opacity="0.9"/>
<line x1="651.6" y1="274.5" x2="651.6" y2="281.4" stroke="#b8282c" stroke-width="1.6" stroke-opacity="0.9"/>
<line x1="655.7" y1="274.5" x2="655.7" y2="281.0" stroke="#b8282c" stroke-width="1.6" stroke-opacity="0.9"/>
<line x1="659.8" y1="274.5" x2="659.8" y2="280.6" stroke="#b8282c" stroke-width="1.6" stroke-opacity="0.9"/>
<line x1="663.9" y1="274.5" x2="663.9" y2="280.2" stroke="#b8282c" stroke-width="1.6" stroke-opacity="0.9"/>
<line x1="668.0" y1="274.5" x2="668.0" y2="279.8" stroke="#b8282c" stroke-width="1.6" stroke-opacity="0.9"/>
<line x1="672.1" y1="274.5" x2="672.1" y2="279.6" stroke="#b8282c" stroke-width="1.6" stroke-opacity="0.9"/>
<line x1="676.2" y1="274.5" x2="676.2" y2="279.4" stroke="#b8282c" stroke-width="1.6" stroke-opacity="0.9"/>
<line x1="680.3" y1="274.5" x2="680.3" y2="279.1" stroke="#b8282c" stroke-width="1.6" stroke-opacity="0.9"/>
<line x1="684.4" y1="274.5" x2="684.4" y2="278.9" stroke="#b8282c" stroke-width="1.6" stroke-opacity="0.9"/>
<line x1="688.5" y1="274.5" x2="688.5" y2="278.7" stroke="#b8282c" stroke-width="1.6" stroke-opacity="0.9"/>
<line x1="692.6" y1="274.5" x2="692.6" y2="278.5" stroke="#b8282c" stroke-width="1.6" stroke-opacity="0.9"/>
<line x1="696.7" y1="274.5" x2="696.7" y2="277.3" stroke="#b8282c" stroke-width="1.6" stroke-opacity="0.9"/>
<line x1="700.8" y1="274.5" x2="700.8" y2="275.7" stroke="#b8282c" stroke-width="1.6" stroke-opacity="0.9"/>
<line x1="704.9" y1="274.5" x2="704.9" y2="273.3" stroke="#b8282c" stroke-width="1.6" stroke-opacity="0.9"/>
<line x1="709.0" y1="274.5" x2="709.0" y2="272.7" stroke="#b8282c" stroke-width="1.6" stroke-opacity="0.9"/>
<line x1="713.1" y1="274.5" x2="713.1" y2="272.7" stroke="#b8282c" stroke-width="1.6" stroke-opacity="0.9"/>
<line x1="717.2" y1="274.5" x2="717.2" y2="272.7" stroke="#b8282c" stroke-width="1.6" stroke-opacity="0.9"/>
<line x1="721.3" y1="274.5" x2="721.3" y2="272.7" stroke="#b8282c" stroke-width="1.6" stroke-opacity="0.9"/>
<line x1="725.4" y1="274.5" x2="725.4" y2="272.8" stroke="#b8282c" stroke-width="1.6" stroke-opacity="0.9"/>
<line x1="729.5" y1="274.5" x2="729.5" y2="272.8" stroke="#b8282c" stroke-width="1.6" stroke-opacity="0.9"/>
<line x1="733.6" y1="274.5" x2="733.6" y2="272.9" stroke="#b8282c" stroke-width="1.6" stroke-opacity="0.9"/>
<line x1="737.7" y1="274.5" x2="737.7" y2="273.0" stroke="#b8282c" stroke-width="1.6" stroke-opacity="0.9"/>
<line x1="741.8" y1="274.5" x2="741.8" y2="273.0" stroke="#b8282c" stroke-width="1.6" stroke-opacity="0.9"/>
<line x1="745.9" y1="274.5" x2="745.9" y2="273.1" stroke="#b8282c" stroke-width="1.6" stroke-opacity="0.9"/>
<line x1="750.0" y1="274.5" x2="750.0" y2="273.2" stroke="#b8282c" stroke-width="1.6" stroke-opacity="0.9"/>
<line x1="754.1" y1="274.5" x2="754.1" y2="273.3" stroke="#b8282c" stroke-width="1.6" stroke-opacity="0.9"/>
<line x1="758.2" y1="274.5" x2="758.2" y2="273.3" stroke="#b8282c" stroke-width="1.6" stroke-opacity="0.9"/>
<line x1="762.3" y1="274.5" x2="762.3" y2="273.3" stroke="#b8282c" stroke-width="1.6" stroke-opacity="0.9"/>
<line x1="766.4" y1="274.5" x2="766.4" y2="273.3" stroke="#b8282c" stroke-width="1.6" stroke-opacity="0.9"/>
<line x1="770.5" y1="274.5" x2="770.5" y2="273.3" stroke="#b8282c" stroke-width="1.6" stroke-opacity="0.9"/>
<line x1="774.6" y1="274.5" x2="774.6" y2="273.3" stroke="#b8282c" stroke-width="1.6" stroke-opacity="0.9"/>
<line x1="778.7" y1="274.5" x2="778.7" y2="273.3" stroke="#b8282c" stroke-width="1.6" stroke-opacity="0.9"/>
<line x1="782.8" y1="274.5" x2="782.8" y2="275.7" stroke="#b8282c" stroke-width="1.6" stroke-opacity="0.9"/>
<line x1="786.9" y1="274.5" x2="786.9" y2="276.4" stroke="#b8282c" stroke-width="1.6" stroke-opacity="0.9"/>
<line x1="791.0" y1="274.5" x2="791.0" y2="278.2" stroke="#b8282c" stroke-width="1.6" stroke-opacity="0.9"/>
<line x1="795.1" y1="274.5" x2="795.1" y2="277.8" stroke="#b8282c" stroke-width="1.6" stroke-opacity="0.9"/>
<line x1="799.2" y1="274.5" x2="799.2" y2="275.7" stroke="#b8282c" stroke-width="1.6" stroke-opacity="0.9"/>
<line x1="803.3" y1="274.5" x2="803.3" y2="275.7" stroke="#b8282c" stroke-width="1.6" stroke-opacity="0.9"/>
<line x1="807.4" y1="274.5" x2="807.4" y2="270.1" stroke="#b8282c" stroke-width="1.6" stroke-opacity="0.9"/>
<line x1="811.5" y1="274.5" x2="811.5" y2="265.3" stroke="#b8282c" stroke-width="1.6" stroke-opacity="0.9"/>
<line x1="815.6" y1="274.5" x2="815.6" y2="262.4" stroke="#b8282c" stroke-width="1.6" stroke-opacity="0.9"/>
<line x1="819.7" y1="274.5" x2="819.7" y2="260.1" stroke="#b8282c" stroke-width="1.6" stroke-opacity="0.9"/>
<line x1="823.8" y1="274.5" x2="823.8" y2="257.8" stroke="#b8282c" stroke-width="1.6" stroke-opacity="0.9"/>
<line x1="827.9" y1="274.5" x2="827.9" y2="258.6" stroke="#b8282c" stroke-width="1.6" stroke-opacity="0.9"/>
<line x1="832.0" y1="274.5" x2="832.0" y2="259.8" stroke="#b8282c" stroke-width="1.6" stroke-opacity="0.9"/>
<line x1="836.1" y1="274.5" x2="836.1" y2="261.9" stroke="#b8282c" stroke-width="1.6" stroke-opacity="0.9"/>
<line x1="840.2" y1="274.5" x2="840.2" y2="264.4" stroke="#b8282c" stroke-width="1.6" stroke-opacity="0.9"/>
<line x1="844.3" y1="274.5" x2="844.3" y2="266.1" stroke="#b8282c" stroke-width="1.6" stroke-opacity="0.9"/>
<line x1="848.4" y1="274.5" x2="848.4" y2="267.7" stroke="#b8282c" stroke-width="1.6" stroke-opacity="0.9"/>
<line x1="852.5" y1="274.5" x2="852.5" y2="269.4" stroke="#b8282c" stroke-width="1.6" stroke-opacity="0.9"/>
<line x1="856.6" y1="274.5" x2="856.6" y2="271.0" stroke="#b8282c" stroke-width="1.6" stroke-opacity="0.9"/>
<line x1="860.7" y1="274.5" x2="860.7" y2="272.6" stroke="#b8282c" stroke-width="1.6" stroke-opacity="0.9"/>
<line x1="864.8" y1="274.5" x2="864.8" y2="273.3" stroke="#b8282c" stroke-width="1.6" stroke-opacity="0.9"/>
<path d="M17.0,275.3 C21.3,275.0 34.3,274.3 43.0,273.8 C51.7,273.2 61.6,272.5 69.0,272.0 C76.4,271.5 80.8,270.2 87.3,271.0 C93.8,271.8 101.5,274.8 108.0,277.0 C114.5,279.2 121.6,282.4 126.4,284.2 C131.2,285.9 132.9,287.5 136.8,287.5 C140.7,287.5 143.7,285.7 149.8,284.2 C155.9,282.7 165.1,279.7 173.3,278.4 C181.6,277.1 192.4,276.8 199.3,276.4 C206.2,276.0 209.4,276.7 215.0,275.8 C220.6,274.9 227.8,271.8 233.0,271.0 C238.2,270.2 240.8,270.3 246.0,271.0 C251.2,271.7 258.3,273.9 264.4,275.3 C270.5,276.8 277.0,278.5 282.6,279.7 C288.2,280.9 295.4,281.7 298.2,282.3 C301.1,282.9 295.4,282.9 300.0,283.1 C304.6,283.3 319.1,283.0 326.0,283.6 C332.9,284.2 334.8,286.3 341.7,286.8 C348.6,287.3 359.9,286.7 367.7,286.8 C375.5,286.9 381.6,286.7 388.5,287.5 C395.4,288.3 404.2,291.2 409.4,291.5 C414.6,291.8 414.7,290.8 419.8,289.4 C424.9,288.0 434.8,284.2 440.0,283.0 C445.2,281.8 446.5,283.0 451.1,282.3 C455.7,281.6 463.2,279.7 467.8,278.8 C472.4,277.9 475.9,276.6 478.9,276.8 C481.9,276.9 481.6,279.0 485.8,279.5 C490.0,280.0 499.5,280.1 503.9,279.5 C508.3,278.9 509.0,277.3 512.2,276.0 C515.4,274.7 520.0,273.2 523.3,271.9 C526.5,270.6 528.9,269.3 531.7,268.4 C534.5,267.5 536.1,266.5 540.0,266.3 C543.9,266.1 551.1,266.3 555.3,267.0 C559.5,267.7 561.1,269.0 565.0,270.5 C568.9,272.0 574.7,274.5 578.9,276.0 C583.1,277.5 583.8,277.6 590.0,279.7 C596.2,281.8 607.3,285.8 616.0,288.9 C624.7,291.9 633.3,295.0 642.0,298.0 C650.7,301.0 659.3,304.4 668.0,307.0 C676.7,309.6 687.7,312.2 694.2,313.6 C700.7,315.0 702.9,315.8 707.2,315.4 C711.5,315.0 713.7,312.2 720.2,311.0 C726.7,309.8 735.8,308.7 746.2,308.4 C756.7,308.1 774.0,308.8 782.7,309.2 C791.4,309.6 793.5,311.4 798.3,311.0 C803.1,310.6 807.0,309.2 811.4,307.0 C815.8,304.8 820.1,301.7 824.4,298.0 C828.7,294.3 833.1,288.1 837.4,285.0 C841.7,281.9 846.1,280.7 850.4,279.7 C854.7,278.7 861.2,279.3 863.4,279.2" fill="none" stroke="#c02a2e" stroke-width="1.6" stroke-linejoin="round"/>
<path d="M17.0,274.5 C19.6,274.5 27.4,274.9 32.6,274.5 C37.8,274.1 41.6,272.9 48.3,272.0 C55.0,271.1 66.5,269.5 73.0,269.3 C79.5,269.1 83.6,269.9 87.3,271.0 C91.0,272.1 91.5,273.9 95.0,275.8 C98.5,277.7 103.7,280.2 108.0,282.3 C112.3,284.4 117.1,287.0 121.0,288.3 C124.9,289.6 128.1,290.4 131.6,290.0 C135.1,289.6 137.7,287.9 142.0,285.7 C146.3,283.5 152.4,278.9 157.6,277.0 C162.8,275.1 166.4,274.6 173.3,274.5 C180.2,274.4 192.8,276.2 199.3,276.4 C205.8,276.6 208.4,277.2 212.3,275.8 C216.2,274.4 219.2,269.5 222.7,268.0 C226.1,266.5 229.5,266.3 233.0,266.7 C236.5,267.1 239.7,269.5 243.6,270.6 C247.5,271.7 252.3,271.9 256.6,273.2 C260.9,274.5 265.3,276.6 269.6,278.4 C273.9,280.2 278.7,283.1 282.6,284.0 C286.5,284.9 289.5,284.5 293.0,284.0 C296.5,283.5 300.2,281.5 303.5,281.0 C306.8,280.5 309.2,280.3 313.0,281.0 C316.8,281.7 322.1,283.5 326.0,285.0 C329.9,286.5 333.0,289.4 336.5,290.2 C340.0,291.0 342.7,290.4 347.0,289.6 C351.3,288.9 357.3,286.4 362.5,285.7 C367.7,285.0 372.8,284.9 378.0,285.7 C383.2,286.4 389.4,288.9 393.8,290.2 C398.1,291.5 400.1,293.9 404.0,293.5 C407.9,293.1 412.0,289.9 417.2,287.6 C422.4,285.4 430.7,281.5 435.4,280.0 C440.1,278.5 442.5,279.5 445.6,278.8 C448.7,278.1 450.2,276.5 453.9,276.0 C457.6,275.5 463.6,275.8 467.8,276.0 C472.0,276.2 474.3,276.9 478.9,277.4 C483.5,277.9 491.2,278.9 495.6,278.8 C500.0,278.7 501.8,278.4 505.3,276.8 C508.8,275.1 512.5,271.2 516.4,269.1 C520.3,267.0 523.8,265.1 528.9,264.2 C534.0,263.4 542.8,263.7 547.0,264.2 C551.2,264.8 551.6,266.2 553.9,267.7 C556.2,269.2 557.8,271.2 560.8,273.3 C563.8,275.4 569.0,278.6 572.0,280.2 C575.0,281.8 575.9,282.5 578.9,283.0 C581.9,283.5 586.4,282.6 590.0,283.0 C593.6,283.4 596.1,283.4 600.4,285.5 C604.7,287.6 609.1,292.0 616.0,295.4 C622.9,298.8 633.3,303.0 642.0,305.8 C650.7,308.6 659.3,310.4 668.0,312.3 C676.7,314.2 687.7,317.3 694.2,317.5 C700.7,317.7 702.9,315.0 707.2,313.6 C711.5,312.2 713.7,310.3 720.2,309.2 C726.7,308.1 735.8,307.0 746.2,307.0 C756.7,307.0 774.9,307.9 782.7,309.2 C790.5,310.5 789.5,314.9 793.0,315.0 C796.5,315.1 800.0,313.2 803.5,309.7 C807.0,306.2 810.5,298.8 814.0,294.0 C817.5,289.2 820.9,284.4 824.4,281.0 C827.9,277.6 830.5,275.0 834.8,273.8 C839.1,272.5 845.6,273.0 850.4,273.8 C855.2,274.5 861.2,277.6 863.4,278.4" fill="none" stroke="#1c801c" stroke-width="1.2" stroke-linejoin="round"/>
</g>
<rect x="18" y="257" width="30" height="14" fill="#3b4149"/>
<text x="19.3" y="268.3" font-size="11.2" fill="#1e7a1e" text-anchor="start" font-family="Liberation Sans" textLength="29" lengthAdjust="spacingAndGlyphs" >MACD</text>
<line x1="24.5" y1="327.5" x2="24.5" y2="401.5" stroke="#68717c" stroke-width="1" stroke-dasharray="3 3"/>
<line x1="49.5" y1="327.5" x2="49.5" y2="401.5" stroke="#68717c" stroke-width="1" stroke-dasharray="3 3"/>
<line x1="73.5" y1="327.5" x2="73.5" y2="401.5" stroke="#68717c" stroke-width="1" stroke-dasharray="3 3"/>
<line x1="98.5" y1="327.5" x2="98.5" y2="401.5" stroke="#68717c" stroke-width="1" stroke-dasharray="3 3"/>
<line x1="122.5" y1="327.5" x2="122.5" y2="401.5" stroke="#68717c" stroke-width="1" stroke-dasharray="3 3"/>
<line x1="147.5" y1="327.5" x2="147.5" y2="401.5" stroke="#68717c" stroke-width="1" stroke-dasharray="3 3"/>
<line x1="172.5" y1="327.5" x2="172.5" y2="401.5" stroke="#68717c" stroke-width="1" stroke-dasharray="3 3"/>
<line x1="196.5" y1="327.5" x2="196.5" y2="401.5" stroke="#68717c" stroke-width="1" stroke-dasharray="3 3"/>
<line x1="221.5" y1="327.5" x2="221.5" y2="401.5" stroke="#68717c" stroke-width="1" stroke-dasharray="3 3"/>
<line x1="270.5" y1="327.5" x2="270.5" y2="401.5" stroke="#68717c" stroke-width="1" stroke-dasharray="3 3"/>
<line x1="295.5" y1="327.5" x2="295.5" y2="401.5" stroke="#68717c" stroke-width="1" stroke-dasharray="3 3"/>
<line x1="319.5" y1="327.5" x2="319.5" y2="401.5" stroke="#68717c" stroke-width="1" stroke-dasharray="3 3"/>
<line x1="344.5" y1="327.5" x2="344.5" y2="401.5" stroke="#68717c" stroke-width="1" stroke-dasharray="3 3"/>
<line x1="368.5" y1="327.5" x2="368.5" y2="401.5" stroke="#68717c" stroke-width="1" stroke-dasharray="3 3"/>
<line x1="393.5" y1="327.5" x2="393.5" y2="401.5" stroke="#68717c" stroke-width="1" stroke-dasharray="3 3"/>
<line x1="417.5" y1="327.5" x2="417.5" y2="401.5" stroke="#68717c" stroke-width="1" stroke-dasharray="3 3"/>
<line x1="442.5" y1="327.5" x2="442.5" y2="401.5" stroke="#68717c" stroke-width="1" stroke-dasharray="3 3"/>
<line x1="467.5" y1="327.5" x2="467.5" y2="401.5" stroke="#68717c" stroke-width="1" stroke-dasharray="3 3"/>
<line x1="491.5" y1="327.5" x2="491.5" y2="401.5" stroke="#68717c" stroke-width="1" stroke-dasharray="3 3"/>
<line x1="516.5" y1="327.5" x2="516.5" y2="401.5" stroke="#68717c" stroke-width="1" stroke-dasharray="3 3"/>
<line x1="540.5" y1="327.5" x2="540.5" y2="401.5" stroke="#68717c" stroke-width="1" stroke-dasharray="3 3"/>
<line x1="565.5" y1="327.5" x2="565.5" y2="401.5" stroke="#68717c" stroke-width="1" stroke-dasharray="3 3"/>
<line x1="590.5" y1="327.5" x2="590.5" y2="401.5" stroke="#68717c" stroke-width="1" stroke-dasharray="3 3"/>
<line x1="614.5" y1="327.5" x2="614.5" y2="401.5" stroke="#68717c" stroke-width="1" stroke-dasharray="3 3"/>
<line x1="639.5" y1="327.5" x2="639.5" y2="401.5" stroke="#68717c" stroke-width="1" stroke-dasharray="3 3"/>
<line x1="663.5" y1="327.5" x2="663.5" y2="401.5" stroke="#68717c" stroke-width="1" stroke-dasharray="3 3"/>
<line x1="688.5" y1="327.5" x2="688.5" y2="401.5" stroke="#68717c" stroke-width="1" stroke-dasharray="3 3"/>
<line x1="712.5" y1="327.5" x2="712.5" y2="401.5" stroke="#68717c" stroke-width="1" stroke-dasharray="3 3"/>
<line x1="737.5" y1="327.5" x2="737.5" y2="401.5" stroke="#68717c" stroke-width="1" stroke-dasharray="3 3"/>
<line x1="762.5" y1="327.5" x2="762.5" y2="401.5" stroke="#68717c" stroke-width="1" stroke-dasharray="3 3"/>
<line x1="786.5" y1="327.5" x2="786.5" y2="401.5" stroke="#68717c" stroke-width="1" stroke-dasharray="3 3"/>
<line x1="835.5" y1="327.5" x2="835.5" y2="401.5" stroke="#68717c" stroke-width="1" stroke-dasharray="3 3"/>
<line x1="860.5" y1="327.5" x2="860.5" y2="401.5" stroke="#68717c" stroke-width="1" stroke-dasharray="3 3"/>
<line x1="885.5" y1="327.5" x2="885.5" y2="401.5" stroke="#68717c" stroke-width="1" stroke-dasharray="3 3"/>
<line x1="245.5" y1="327.5" x2="245.5" y2="401.5" stroke="#75818e" stroke-width="1"/>
<line x1="811.5" y1="327.5" x2="811.5" y2="401.5" stroke="#75818e" stroke-width="1"/>
<line x1="17.5" y1="356.5" x2="900.5" y2="356.5" stroke="#68717c" stroke-width="1" stroke-dasharray="3 3"/>
<g clip-path="url(#cr)">
<polygon points="17.0,353.2 19.6,359.0 23.2,359.5 26.9,359.0 31.6,355.3 36.3,352.7 41.5,345.9 45.1,349.0 49.3,349.6 54.5,353.2 58.1,354.8 61.3,359.5 66.0,348.5 70.1,344.4 73.2,345.4 77.4,353.2 82.6,360.5 86.3,357.4 90.4,366.8 97.2,367.8 101.9,367.3 106.6,376.7 109.7,379.3 117.0,375.1 121.2,376.1 125.3,377.2 129.5,376.7 132.1,373.0 134.2,361.0 135.8,355.8 139.2,359.5 143.3,354.3 147.5,352.7 152.7,349.6 159.0,347.0 163.1,355.3 168.3,352.2 172.5,352.2 180.3,362.6 184.5,356.4 188.6,360.5 192.3,353.2 197.5,359.0 202.7,362.6 209.0,370.4 212.1,349.6 213.6,338.6 217.8,344.4 220.4,342.3 225.6,342.8 229.8,342.3 237.6,363.1 243.3,362.1 245.4,361.0 249.6,363.1 253.8,364.7 258.2,359.0 262.9,367.3 272.8,366.2 274.9,368.3 278.5,376.7 285.8,360.5 290.5,363.1 294.7,361.0 299.4,361.0 304.0,358.4 307.2,359.0 311.3,365.2 315.5,362.6 320.7,369.9 326.4,374.6 330.6,381.4 335.3,372.5 340.5,368.3 344.7,369.4 352.5,356.9 356.6,364.7 360.3,366.2 367.6,360.5 371.0,360.5 376.2,364.7 381.4,366.2 385.1,378.2 389.8,374.1 393.4,374.6 397.0,379.3 401.7,370.4 405.4,373.0 409.5,361.6 413.7,361.0 418.9,356.4 423.1,354.3 427.8,354.3 434.5,359.5 438.2,353.8 442.4,360.0 446.5,362.1 450.2,354.3 454.3,349.6 458.5,360.0 467.4,352.2 471.0,354.3 475.2,363.1 479.3,363.1 483.5,367.8 487.1,360.5 490.8,358.4 494.2,356.9 499.4,366.2 503.1,353.2 507.8,343.9 511.9,344.9 516.6,341.2 521.3,341.2 524.9,343.3 528.1,341.2 532.2,351.1 536.9,343.3 543.2,346.5 548.4,355.8 557.2,371.5 565.0,365.2 569.2,369.4 573.4,366.2 577.5,366.2 580.7,364.7 585.9,368.3 590.0,366.8 594.2,364.7 598.4,368.3 602.1,369.6 605.2,382.1 606.8,386.2 610.4,384.7 618.2,386.2 620.3,381.0 622.4,374.3 626.0,381.6 631.2,386.2 639.6,385.2 643.8,388.3 647.9,388.3 651.6,385.7 655.2,393.5 659.4,389.4 663.5,392.5 671.4,383.6 679.2,389.9 692.2,398.2 696.4,382.1 700.0,374.3 704.2,378.4 708.9,379.5 712.5,379.0 717.2,371.7 720.6,375.4 725.2,381.9 729.1,381.2 733.6,376.0 738.8,375.4 745.3,381.2 749.2,371.5 753.8,379.9 757.0,381.2 761.0,381.2 766.2,379.9 770.1,373.4 777.9,379.9 780.5,383.8 790.3,389.0 794.8,383.8 801.3,366.2 809.1,355.2 815.0,355.2 818.9,350.6 823.5,339.6 827.4,346.7 831.9,351.3 835.8,349.3 844.3,357.8 848.2,357.1 856.0,365.0 859.9,365.0 863.2,366.2 863.4,382.0 17.0,382.0" fill="url(#rsig)"/>
</g>
<line x1="24.5" y1="327.5" x2="24.5" y2="401.5" stroke="#68717c" stroke-width="1" stroke-dasharray="3 3"/>
<line x1="49.5" y1="327.5" x2="49.5" y2="401.5" stroke="#68717c" stroke-width="1" stroke-dasharray="3 3"/>
<line x1="73.5" y1="327.5" x2="73.5" y2="401.5" stroke="#68717c" stroke-width="1" stroke-dasharray="3 3"/>
<line x1="98.5" y1="327.5" x2="98.5" y2="401.5" stroke="#68717c" stroke-width="1" stroke-dasharray="3 3"/>
<line x1="122.5" y1="327.5" x2="122.5" y2="401.5" stroke="#68717c" stroke-width="1" stroke-dasharray="3 3"/>
<line x1="147.5" y1="327.5" x2="147.5" y2="401.5" stroke="#68717c" stroke-width="1" stroke-dasharray="3 3"/>
<line x1="172.5" y1="327.5" x2="172.5" y2="401.5" stroke="#68717c" stroke-width="1" stroke-dasharray="3 3"/>
<line x1="196.5" y1="327.5" x2="196.5" y2="401.5" stroke="#68717c" stroke-width="1" stroke-dasharray="3 3"/>
<line x1="221.5" y1="327.5" x2="221.5" y2="401.5" stroke="#68717c" stroke-width="1" stroke-dasharray="3 3"/>
<line x1="270.5" y1="327.5" x2="270.5" y2="401.5" stroke="#68717c" stroke-width="1" stroke-dasharray="3 3"/>
<line x1="295.5" y1="327.5" x2="295.5" y2="401.5" stroke="#68717c" stroke-width="1" stroke-dasharray="3 3"/>
<line x1="319.5" y1="327.5" x2="319.5" y2="401.5" stroke="#68717c" stroke-width="1" stroke-dasharray="3 3"/>
<line x1="344.5" y1="327.5" x2="344.5" y2="401.5" stroke="#68717c" stroke-width="1" stroke-dasharray="3 3"/>
<line x1="368.5" y1="327.5" x2="368.5" y2="401.5" stroke="#68717c" stroke-width="1" stroke-dasharray="3 3"/>
<line x1="393.5" y1="327.5" x2="393.5" y2="401.5" stroke="#68717c" stroke-width="1" stroke-dasharray="3 3"/>
<line x1="417.5" y1="327.5" x2="417.5" y2="401.5" stroke="#68717c" stroke-width="1" stroke-dasharray="3 3"/>
<line x1="442.5" y1="327.5" x2="442.5" y2="401.5" stroke="#68717c" stroke-width="1" stroke-dasharray="3 3"/>
<line x1="467.5" y1="327.5" x2="467.5" y2="401.5" stroke="#68717c" stroke-width="1" stroke-dasharray="3 3"/>
<line x1="491.5" y1="327.5" x2="491.5" y2="401.5" stroke="#68717c" stroke-width="1" stroke-dasharray="3 3"/>
<line x1="516.5" y1="327.5" x2="516.5" y2="401.5" stroke="#68717c" stroke-width="1" stroke-dasharray="3 3"/>
<line x1="540.5" y1="327.5" x2="540.5" y2="401.5" stroke="#68717c" stroke-width="1" stroke-dasharray="3 3"/>
<line x1="565.5" y1="327.5" x2="565.5" y2="401.5" stroke="#68717c" stroke-width="1" stroke-dasharray="3 3"/>
<line x1="590.5" y1="327.5" x2="590.5" y2="401.5" stroke="#68717c" stroke-width="1" stroke-dasharray="3 3"/>
<line x1="614.5" y1="327.5" x2="614.5" y2="401.5" stroke="#68717c" stroke-width="1" stroke-dasharray="3 3"/>
<line x1="639.5" y1="327.5" x2="639.5" y2="401.5" stroke="#68717c" stroke-width="1" stroke-dasharray="3 3"/>
<line x1="663.5" y1="327.5" x2="663.5" y2="401.5" stroke="#68717c" stroke-width="1" stroke-dasharray="3 3"/>
<line x1="688.5" y1="327.5" x2="688.5" y2="401.5" stroke="#68717c" stroke-width="1" stroke-dasharray="3 3"/>
<line x1="712.5" y1="327.5" x2="712.5" y2="401.5" stroke="#68717c" stroke-width="1" stroke-dasharray="3 3"/>
<line x1="737.5" y1="327.5" x2="737.5" y2="401.5" stroke="#68717c" stroke-width="1" stroke-dasharray="3 3"/>
<line x1="762.5" y1="327.5" x2="762.5" y2="401.5" stroke="#68717c" stroke-width="1" stroke-dasharray="3 3"/>
<line x1="786.5" y1="327.5" x2="786.5" y2="401.5" stroke="#68717c" stroke-width="1" stroke-dasharray="3 3"/>
<line x1="835.5" y1="327.5" x2="835.5" y2="401.5" stroke="#68717c" stroke-width="1" stroke-dasharray="3 3"/>
<line x1="860.5" y1="327.5" x2="860.5" y2="401.5" stroke="#68717c" stroke-width="1" stroke-dasharray="3 3"/>
<line x1="885.5" y1="327.5" x2="885.5" y2="401.5" stroke="#68717c" stroke-width="1" stroke-dasharray="3 3"/>
<line x1="245.5" y1="327.5" x2="245.5" y2="401.5" stroke="#75818e" stroke-width="1"/>
<line x1="811.5" y1="327.5" x2="811.5" y2="401.5" stroke="#75818e" stroke-width="1"/>
<line x1="17.5" y1="356.5" x2="900.5" y2="356.5" stroke="#68717c" stroke-width="1" stroke-dasharray="3 3"/>
<g clip-path="url(#cr)">
<line x1="17.5" y1="330.5" x2="863.4" y2="330.5" stroke="#16169e" stroke-width="2"/>
<line x1="17.5" y1="382.5" x2="863.4" y2="382.5" stroke="#16169e" stroke-width="2"/>
<polyline points="17.0,353.2 19.6,359.0 23.2,359.5 26.9,359.0 31.6,355.3 36.3,352.7 41.5,345.9 45.1,349.0 49.3,349.6 54.5,353.2 58.1,354.8 61.3,359.5 66.0,348.5 70.1,344.4 73.2,345.4 77.4,353.2 82.6,360.5 86.3,357.4 90.4,366.8 97.2,367.8 101.9,367.3 106.6,376.7 109.7,379.3 117.0,375.1 121.2,376.1 125.3,377.2 129.5,376.7 132.1,373.0 134.2,361.0 135.8,355.8 139.2,359.5 143.3,354.3 147.5,352.7 152.7,349.6 159.0,347.0 163.1,355.3 168.3,352.2 172.5,352.2 180.3,362.6 184.5,356.4 188.6,360.5 192.3,353.2 197.5,359.0 202.7,362.6 209.0,370.4 212.1,349.6 213.6,338.6 217.8,344.4 220.4,342.3 225.6,342.8 229.8,342.3 237.6,363.1 243.3,362.1 245.4,361.0 249.6,363.1 253.8,364.7 258.2,359.0 262.9,367.3 272.8,366.2 274.9,368.3 278.5,376.7 285.8,360.5 290.5,363.1 294.7,361.0 299.4,361.0 304.0,358.4 307.2,359.0 311.3,365.2 315.5,362.6 320.7,369.9 326.4,374.6 330.6,381.4 335.3,372.5 340.5,368.3 344.7,369.4 352.5,356.9 356.6,364.7 360.3,366.2 367.6,360.5 371.0,360.5 376.2,364.7 381.4,366.2 385.1,378.2 389.8,374.1 393.4,374.6 397.0,379.3 401.7,370.4 405.4,373.0 409.5,361.6 413.7,361.0 418.9,356.4 423.1,354.3 427.8,354.3 434.5,359.5 438.2,353.8 442.4,360.0 446.5,362.1 450.2,354.3 454.3,349.6 458.5,360.0 467.4,352.2 471.0,354.3 475.2,363.1 479.3,363.1 483.5,367.8 487.1,360.5 490.8,358.4 494.2,356.9 499.4,366.2 503.1,353.2 507.8,343.9 511.9,344.9 516.6,341.2 521.3,341.2 524.9,343.3 528.1,341.2 532.2,351.1 536.9,343.3 543.2,346.5 548.4,355.8 557.2,371.5 565.0,365.2 569.2,369.4 573.4,366.2 577.5,366.2 580.7,364.7 585.9,368.3 590.0,366.8 594.2,364.7 598.4,368.3 602.1,369.6 605.2,382.1 606.8,386.2 610.4,384.7 618.2,386.2 620.3,381.0 622.4,374.3 626.0,381.6 631.2,386.2 639.6,385.2 643.8,388.3 647.9,388.3 651.6,385.7 655.2,393.5 659.4,389.4 663.5,392.5 671.4,383.6 679.2,389.9 692.2,398.2 696.4,382.1 700.0,374.3 704.2,378.4 708.9,379.5 712.5,379.0 717.2,371.7 720.6,375.4 725.2,381.9 729.1,381.2 733.6,376.0 738.8,375.4 745.3,381.2 749.2,371.5 753.8,379.9 757.0,381.2 761.0,381.2 766.2,379.9 770.1,373.4 777.9,379.9 780.5,383.8 790.3,389.0 794.8,383.8 801.3,366.2 809.1,355.2 815.0,355.2 818.9,350.6 823.5,339.6 827.4,346.7 831.9,351.3 835.8,349.3 844.3,357.8 848.2,357.1 856.0,365.0 859.9,365.0 863.2,366.2" fill="none" stroke="#ec8a30" stroke-width="1" stroke-linejoin="round"/>
<polyline points="326.4,374.6 330.6,381.4 330.8,381.0" fill="none" stroke="#3ed03e" stroke-width="1" stroke-linejoin="round"/>
<polyline points="602.1,369.6 605.2,382.1 606.8,386.2 610.4,384.7 618.2,386.2 619.5,383.0" fill="none" stroke="#3ed03e" stroke-width="1" stroke-linejoin="round"/>
<polyline points="624.8,379.2 626.0,381.6 631.2,386.2 639.6,385.2 643.8,388.3 647.9,388.3 651.6,385.7 655.2,393.5 659.4,389.4 663.5,392.5 671.4,383.6 679.2,389.9 692.2,398.2 694.0,391.3" fill="none" stroke="#3ed03e" stroke-width="1" stroke-linejoin="round"/>
<polyline points="719.5,374.2 720.6,375.4 725.2,381.9 728.0,381.4" fill="none" stroke="#3ed03e" stroke-width="1" stroke-linejoin="round"/>
<polyline points="751.0,374.7 753.8,379.9 757.0,381.2 760.0,381.2" fill="none" stroke="#3ed03e" stroke-width="1" stroke-linejoin="round"/>
<polyline points="778.5,380.8 780.5,383.8 790.3,389.0 794.0,384.7" fill="none" stroke="#3ed03e" stroke-width="1" stroke-linejoin="round"/>
</g>
<rect x="18" y="328" width="17" height="13" fill="#3b4149"/>
<text x="19.3" y="338.9" font-size="11.2" fill="#e8802e" text-anchor="start" font-family="Liberation Sans" textLength="15.4" lengthAdjust="spacingAndGlyphs" >RSI</text>
<rect x="17.5" y="39.5" width="883.0" height="211.0" fill="none" stroke="#b3c2d1" stroke-width="1"/>
<rect x="17.5" y="256.5" width="883.0" height="65.0" fill="none" stroke="#b3c2d1" stroke-width="1"/>
<rect x="17.5" y="327.5" width="883.0" height="74.0" fill="none" stroke="#b3c2d1" stroke-width="1"/>
<rect x="184" y="39" width="18.4" height="2" fill="#b02a2e"/>
<rect x="215" y="39" width="7.0" height="2" fill="#b02a2e"/>
<rect x="223" y="39" width="4.0" height="2" fill="#1c1cb8"/>
<rect x="240" y="39" width="3.5" height="2" fill="#1c1cb8"/>
<rect x="244" y="39" width="16.7" height="2" fill="#b02a2e"/>
<line x1="900.5" y1="79.5" x2="904" y2="79.5" stroke="#b3c2d1" stroke-width="1"/>
<line x1="900.5" y1="123.5" x2="904" y2="123.5" stroke="#b3c2d1" stroke-width="1"/>
<line x1="900.5" y1="168.5" x2="904" y2="168.5" stroke="#b3c2d1" stroke-width="1"/>
<line x1="900.5" y1="213.5" x2="904" y2="213.5" stroke="#b3c2d1" stroke-width="1"/>
<line x1="900.5" y1="274.5" x2="904" y2="274.5" stroke="#b3c2d1" stroke-width="1"/>
<line x1="900.5" y1="356.5" x2="904" y2="356.5" stroke="#b3c2d1" stroke-width="1"/>
<line x1="24.5" y1="401" x2="24.5" y2="405" stroke="#b3c2d1" stroke-width="1"/>
<line x1="49.5" y1="401" x2="49.5" y2="405" stroke="#b3c2d1" stroke-width="1"/>
<line x1="73.5" y1="401" x2="73.5" y2="405" stroke="#b3c2d1" stroke-width="1"/>
<line x1="98.5" y1="401" x2="98.5" y2="405" stroke="#b3c2d1" stroke-width="1"/>
<line x1="122.5" y1="401" x2="122.5" y2="405" stroke="#b3c2d1" stroke-width="1"/>
<line x1="147.5" y1="401" x2="147.5" y2="405" stroke="#b3c2d1" stroke-width="1"/>
<line x1="172.5" y1="401" x2="172.5" y2="405" stroke="#b3c2d1" stroke-width="1"/>
<line x1="196.5" y1="401" x2="196.5" y2="405" stroke="#b3c2d1" stroke-width="1"/>
<line x1="221.5" y1="401" x2="221.5" y2="405" stroke="#b3c2d1" stroke-width="1"/>
<line x1="245.5" y1="401" x2="245.5" y2="405" stroke="#b3c2d1" stroke-width="1"/>
<line x1="270.5" y1="401" x2="270.5" y2="405" stroke="#b3c2d1" stroke-width="1"/>
<line x1="295.5" y1="401" x2="295.5" y2="405" stroke="#b3c2d1" stroke-width="1"/>
<line x1="319.5" y1="401" x2="319.5" y2="405" stroke="#b3c2d1" stroke-width="1"/>
<line x1="344.5" y1="401" x2="344.5" y2="405" stroke="#b3c2d1" stroke-width="1"/>
<line x1="368.5" y1="401" x2="368.5" y2="405" stroke="#b3c2d1" stroke-width="1"/>
<line x1="393.5" y1="401" x2="393.5" y2="405" stroke="#b3c2d1" stroke-width="1"/>
<line x1="417.5" y1="401" x2="417.5" y2="405" stroke="#b3c2d1" stroke-width="1"/>
<line x1="442.5" y1="401" x2="442.5" y2="405" stroke="#b3c2d1" stroke-width="1"/>
<line x1="467.5" y1="401" x2="467.5" y2="405" stroke="#b3c2d1" stroke-width="1"/>
<line x1="491.5" y1="401" x2="491.5" y2="405" stroke="#b3c2d1" stroke-width="1"/>
<line x1="516.5" y1="401" x2="516.5" y2="405" stroke="#b3c2d1" stroke-width="1"/>
<line x1="540.5" y1="401" x2="540.5" y2="405" stroke="#b3c2d1" stroke-width="1"/>
<line x1="565.5" y1="401" x2="565.5" y2="405" stroke="#b3c2d1" stroke-width="1"/>
<line x1="590.5" y1="401" x2="590.5" y2="405" stroke="#b3c2d1" stroke-width="1"/>
<line x1="614.5" y1="401" x2="614.5" y2="405" stroke="#b3c2d1" stroke-width="1"/>
<line x1="639.5" y1="401" x2="639.5" y2="405" stroke="#b3c2d1" stroke-width="1"/>
<line x1="663.5" y1="401" x2="663.5" y2="405" stroke="#b3c2d1" stroke-width="1"/>
<line x1="688.5" y1="401" x2="688.5" y2="405" stroke="#b3c2d1" stroke-width="1"/>
<line x1="712.5" y1="401" x2="712.5" y2="405" stroke="#b3c2d1" stroke-width="1"/>
<line x1="737.5" y1="401" x2="737.5" y2="405" stroke="#b3c2d1" stroke-width="1"/>
<line x1="762.5" y1="401" x2="762.5" y2="405" stroke="#b3c2d1" stroke-width="1"/>
<line x1="786.5" y1="401" x2="786.5" y2="405" stroke="#b3c2d1" stroke-width="1"/>
<line x1="811.5" y1="401" x2="811.5" y2="405" stroke="#b3c2d1" stroke-width="1"/>
<line x1="835.5" y1="401" x2="835.5" y2="405" stroke="#b3c2d1" stroke-width="1"/>
<line x1="860.5" y1="401" x2="860.5" y2="405" stroke="#b3c2d1" stroke-width="1"/>
<line x1="885.5" y1="401" x2="885.5" y2="405" stroke="#b3c2d1" stroke-width="1"/>
<line x1="18.0" y1="378" x2="18.0" y2="405" stroke="#d8e6ec" stroke-width="2"/>
<rect x="18.5" y="378.5" width="69.0" height="19" rx="2" fill="#5d6c80" stroke="#a8bccd" stroke-width="1"/>
<text x="25.0" y="392.1" font-size="11.2" fill="#f0f2f4" text-anchor="start" font-family="Liberation Sans" textLength="57" lengthAdjust="spacingAndGlyphs" stroke="#f0f2f4" stroke-width="0.1">Июнь 2020</text>
<line x1="246.0" y1="378" x2="246.0" y2="405" stroke="#d8e6ec" stroke-width="2"/>
<rect x="246.5" y="378.5" width="68.19999999999999" height="19" rx="2" fill="#5d6c80" stroke="#a8bccd" stroke-width="1"/>
<text x="252.9" y="392.1" font-size="11.2" fill="#f0f2f4" text-anchor="start" font-family="Liberation Sans" textLength="56" lengthAdjust="spacingAndGlyphs" stroke="#f0f2f4" stroke-width="0.1">Июль 2020</text>
<line x1="812.0" y1="378" x2="812.0" y2="405" stroke="#d8e6ec" stroke-width="2"/>
<rect x="812.5" y="378.5" width="59.299999999999955" height="19" rx="2" fill="#5d6c80" stroke="#a8bccd" stroke-width="1"/>
<text x="819.9" y="392.1" font-size="11.2" fill="#f0f2f4" text-anchor="start" font-family="Liberation Sans" textLength="45.5" lengthAdjust="spacingAndGlyphs" stroke="#f0f2f4" stroke-width="0.1">Авг 2020</text>
<text x="907.6" y="86.1" font-size="11.2" fill="#f4f4f4" text-anchor="start" font-family="Liberation Sans" textLength="33.2" lengthAdjust="spacingAndGlyphs" stroke="#f4f4f4" stroke-width="0.25">0.9400</text>
<text x="907.6" y="130.1" font-size="11.2" fill="#f4f4f4" text-anchor="start" font-family="Liberation Sans" textLength="33.2" lengthAdjust="spacingAndGlyphs" stroke="#f4f4f4" stroke-width="0.25">0.9300</text>
<text x="907.6" y="175.1" font-size="11.2" fill="#f4f4f4" text-anchor="start" font-family="Liberation Sans" textLength="33.2" lengthAdjust="spacingAndGlyphs" stroke="#f4f4f4" stroke-width="0.25">0.9200</text>
<text x="907.6" y="220.1" font-size="11.2" fill="#f4f4f4" text-anchor="start" font-family="Liberation Sans" textLength="33.2" lengthAdjust="spacingAndGlyphs" stroke="#f4f4f4" stroke-width="0.25">0.9100</text>
<rect x="900" y="193" width="48" height="21" fill="#ffffff"/>
<text x="908.5" y="207.1" font-size="11.2" fill="#4a4a4a" text-anchor="start" font-family="Liberation Sans" textLength="33.4" lengthAdjust="spacingAndGlyphs" >0.9122</text>
<text x="909.2" y="281.6" font-size="11.2" fill="#f4f4f4" text-anchor="start" font-family="Liberation Sans" textLength="33.9" lengthAdjust="spacingAndGlyphs" stroke="#f4f4f4" stroke-width="0.25">+0.000</text>
<text x="907.8" y="363.1" font-size="11.2" fill="#f4f4f4" text-anchor="start" font-family="Liberation Sans" textLength="12.4" lengthAdjust="spacingAndGlyphs" stroke="#f4f4f4" stroke-width="0.25">50</text>
<text x="23.8" y="424.2" font-size="11.2" fill="#f4f4f4" text-anchor="middle" font-family="Liberation Sans" textLength="11.8" lengthAdjust="spacingAndGlyphs" stroke="#f4f4f4" stroke-width="0.25">18</text>
<text x="48.4" y="424.2" font-size="11.2" fill="#f4f4f4" text-anchor="middle" font-family="Liberation Sans" textLength="11.8" lengthAdjust="spacingAndGlyphs" stroke="#f4f4f4" stroke-width="0.25">19</text>
<text x="73.0" y="424.2" font-size="11.2" fill="#f4f4f4" text-anchor="middle" font-family="Liberation Sans" textLength="11.8" lengthAdjust="spacingAndGlyphs" stroke="#f4f4f4" stroke-width="0.25">22</text>
<text x="97.6" y="424.2" font-size="11.2" fill="#f4f4f4" text-anchor="middle" font-family="Liberation Sans" textLength="11.8" lengthAdjust="spacingAndGlyphs" stroke="#f4f4f4" stroke-width="0.25">23</text>
<text x="122.2" y="424.2" font-size="11.2" fill="#f4f4f4" text-anchor="middle" font-family="Liberation Sans" textLength="11.8" lengthAdjust="spacingAndGlyphs" stroke="#f4f4f4" stroke-width="0.25">24</text>
<text x="146.8" y="424.2" font-size="11.2" fill="#f4f4f4" text-anchor="middle" font-family="Liberation Sans" textLength="11.8" lengthAdjust="spacingAndGlyphs" stroke="#f4f4f4" stroke-width="0.25">25</text>
<text x="171.4" y="424.2" font-size="11.2" fill="#f4f4f4" text-anchor="middle" font-family="Liberation Sans" textLength="11.8" lengthAdjust="spacingAndGlyphs" stroke="#f4f4f4" stroke-width="0.25">26</text>
<text x="196.0" y="424.2" font-size="11.2" fill="#f4f4f4" text-anchor="middle" font-family="Liberation Sans" textLength="11.8" lengthAdjust="spacingAndGlyphs" stroke="#f4f4f4" stroke-width="0.25">29</text>
<text x="220.6" y="424.2" font-size="11.2" fill="#f4f4f4" text-anchor="middle" font-family="Liberation Sans" textLength="11.8" lengthAdjust="spacingAndGlyphs" stroke="#f4f4f4" stroke-width="0.25">30</text>
<text x="245.2" y="424.2" font-size="11.2" fill="#f4f4f4" text-anchor="middle" font-family="Liberation Sans" textLength="6.2" lengthAdjust="spacingAndGlyphs" stroke="#f4f4f4" stroke-width="0.25">1</text>
<text x="269.8" y="424.2" font-size="11.2" fill="#f4f4f4" text-anchor="middle" font-family="Liberation Sans" textLength="6.2" lengthAdjust="spacingAndGlyphs" stroke="#f4f4f4" stroke-width="0.25">2</text>
<text x="294.4" y="424.2" font-size="11.2" fill="#f4f4f4" text-anchor="middle" font-family="Liberation Sans" textLength="6.2" lengthAdjust="spacingAndGlyphs" stroke="#f4f4f4" stroke-width="0.25">3</text>
<text x="319.0" y="424.2" font-size="11.2" fill="#f4f4f4" text-anchor="middle" font-family="Liberation Sans" textLength="6.2" lengthAdjust="spacingAndGlyphs" stroke="#f4f4f4" stroke-width="0.25">6</text>
<text x="343.6" y="424.2" font-size="11.2" fill="#f4f4f4" text-anchor="middle" font-family="Liberation Sans" textLength="6.2" lengthAdjust="spacingAndGlyphs" stroke="#f4f4f4" stroke-width="0.25">7</text>
<text x="368.2" y="424.2" font-size="11.2" fill="#f4f4f4" text-anchor="middle" font-family="Liberation Sans" textLength="6.2" lengthAdjust="spacingAndGlyphs" stroke="#f4f4f4" stroke-width="0.25">8</text>
<text x="392.8" y="424.2" font-size="11.2" fill="#f4f4f4" text-anchor="middle" font-family="Liberation Sans" textLength="6.2" lengthAdjust="spacingAndGlyphs" stroke="#f4f4f4" stroke-width="0.25">9</text>
<text x="417.4" y="424.2" font-size="11.2" fill="#f4f4f4" text-anchor="middle" font-family="Liberation Sans" textLength="11.8" lengthAdjust="spacingAndGlyphs" stroke="#f4f4f4" stroke-width="0.25">10</text>
<text x="442.0" y="424.2" font-size="11.2" fill="#f4f4f4" text-anchor="middle" font-family="Liberation Sans" textLength="11.8" lengthAdjust="spacingAndGlyphs" stroke="#f4f4f4" stroke-width="0.25">13</text>
<text x="466.6" y="424.2" font-size="11.2" fill="#f4f4f4" text-anchor="middle" font-family="Liberation Sans" textLength="11.8" lengthAdjust="spacingAndGlyphs" stroke="#f4f4f4" stroke-width="0.25">14</text>
<text x="491.2" y="424.2" font-size="11.2" fill="#f4f4f4" text-anchor="middle" font-family="Liberation Sans" textLength="11.8" lengthAdjust="spacingAndGlyphs" stroke="#f4f4f4" stroke-width="0.25">15</text>
<text x="515.8" y="424.2" font-size="11.2" fill="#f4f4f4" text-anchor="middle" font-family="Liberation Sans" textLength="11.8" lengthAdjust="spacingAndGlyphs" stroke="#f4f4f4" stroke-width="0.25">16</text>
<text x="540.4" y="424.2" font-size="11.2" fill="#f4f4f4" text-anchor="middle" font-family="Liberation Sans" textLength="11.8" lengthAdjust="spacingAndGlyphs" stroke="#f4f4f4" stroke-width="0.25">17</text>
<text x="565.0" y="424.2" font-size="11.2" fill="#f4f4f4" text-anchor="middle" font-family="Liberation Sans" textLength="11.8" lengthAdjust="spacingAndGlyphs" stroke="#f4f4f4" stroke-width="0.25">20</text>
<text x="589.6" y="424.2" font-size="11.2" fill="#f4f4f4" text-anchor="middle" font-family="Liberation Sans" textLength="11.8" lengthAdjust="spacingAndGlyphs" stroke="#f4f4f4" stroke-width="0.25">21</text>
<text x="614.2" y="424.2" font-size="11.2" fill="#f4f4f4" text-anchor="middle" font-family="Liberation Sans" textLength="11.8" lengthAdjust="spacingAndGlyphs" stroke="#f4f4f4" stroke-width="0.25">22</text>
<text x="638.8" y="424.2" font-size="11.2" fill="#f4f4f4" text-anchor="middle" font-family="Liberation Sans" textLength="11.8" lengthAdjust="spacingAndGlyphs" stroke="#f4f4f4" stroke-width="0.25">23</text>
<text x="663.4" y="424.2" font-size="11.2" fill="#f4f4f4" text-anchor="middle" font-family="Liberation Sans" textLength="11.8" lengthAdjust="spacingAndGlyphs" stroke="#f4f4f4" stroke-width="0.25">24</text>
<text x="688.0" y="424.2" font-size="11.2" fill="#f4f4f4" text-anchor="middle" font-family="Liberation Sans" textLength="11.8" lengthAdjust="spacingAndGlyphs" stroke="#f4f4f4" stroke-width="0.25">27</text>
<text x="712.6" y="424.2" font-size="11.2" fill="#f4f4f4" text-anchor="middle" font-family="Liberation Sans" textLength="11.8" lengthAdjust="spacingAndGlyphs" stroke="#f4f4f4" stroke-width="0.25">28</text>
<text x="737.2" y="424.2" font-size="11.2" fill="#f4f4f4" text-anchor="middle" font-family="Liberation Sans" textLength="11.8" lengthAdjust="spacingAndGlyphs" stroke="#f4f4f4" stroke-width="0.25">29</text>
<text x="761.8" y="424.2" font-size="11.2" fill="#f4f4f4" text-anchor="middle" font-family="Liberation Sans" textLength="11.8" lengthAdjust="spacingAndGlyphs" stroke="#f4f4f4" stroke-width="0.25">30</text>
<text x="786.4" y="424.2" font-size="11.2" fill="#f4f4f4" text-anchor="middle" font-family="Liberation Sans" textLength="11.8" lengthAdjust="spacingAndGlyphs" stroke="#f4f4f4" stroke-width="0.25">31</text>
<text x="811.0" y="424.2" font-size="11.2" fill="#f4f4f4" text-anchor="middle" font-family="Liberation Sans" textLength="6.2" lengthAdjust="spacingAndGlyphs" stroke="#f4f4f4" stroke-width="0.25">3</text>
<text x="835.6" y="424.2" font-size="11.2" fill="#f4f4f4" text-anchor="middle" font-family="Liberation Sans" textLength="6.2" lengthAdjust="spacingAndGlyphs" stroke="#f4f4f4" stroke-width="0.25">4</text>
<text x="860.2" y="424.2" font-size="11.2" fill="#f4f4f4" text-anchor="middle" font-family="Liberation Sans" textLength="6.2" lengthAdjust="spacingAndGlyphs" stroke="#f4f4f4" stroke-width="0.25">5</text>
<text x="884.8" y="424.2" font-size="11.2" fill="#f4f4f4" text-anchor="middle" font-family="Liberation Sans" textLength="6.2" lengthAdjust="spacingAndGlyphs" stroke="#f4f4f4" stroke-width="0.25">6</text>
</svg>
</body></html>
